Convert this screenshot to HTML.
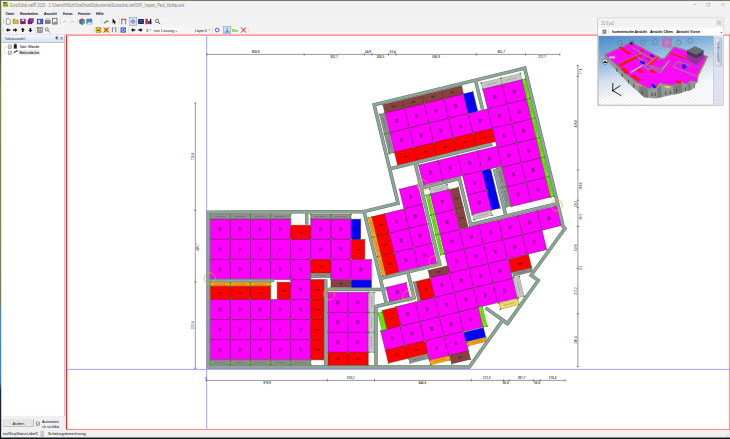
<!DOCTYPE html><html><head><meta charset="utf-8"><title>EuroSchal</title>
<style>html,body{margin:0;padding:0;background:#202024;overflow:hidden}svg{display:block}text{font-family:"Liberation Sans",sans-serif}</style></head><body>
<svg width="730" height="439" viewBox="0 0 730 439">
<defs>
<linearGradient id="desk" x1="0" y1="0" x2="0" y2="1"><stop offset="0" stop-color="#6b6d4e"/><stop offset="0.12" stop-color="#50573f"/><stop offset="0.2" stop-color="#7e8859"/><stop offset="0.69" stop-color="#7a8458"/><stop offset="0.71" stop-color="#4a88c4"/><stop offset="0.87" stop-color="#4680bc"/><stop offset="0.89" stop-color="#1f2a44"/><stop offset="1" stop-color="#15181f"/></linearGradient>
<linearGradient id="hdr" x1="0" y1="0" x2="0" y2="1"><stop offset="0" stop-color="#f4f8fd"/><stop offset="1" stop-color="#d5e2f3"/></linearGradient>
<linearGradient id="sky" x1="0" y1="0" x2="0.32" y2="1"><stop offset="0" stop-color="#4f8fcc"/><stop offset="0.33" stop-color="#8cb8e0"/><stop offset="0.62" stop-color="#dce8f4"/><stop offset="0.88" stop-color="#ffffff"/></linearGradient>
<linearGradient id="tab" x1="0" y1="0" x2="1" y2="0"><stop offset="0" stop-color="#eef2fa"/><stop offset="1" stop-color="#b9c4dd"/></linearGradient>
<clipPath id="c3d"><rect x="598.6" y="36" width="115" height="69"/></clipPath>
</defs>
<rect x="0" y="0" width="730" height="439" fill="url(#desk)"/>
<rect x="0" y="437.2" width="730" height="2" fill="#15171c"/>
<rect x="1.5" y="0.9" width="728.5" height="436.4" fill="#f0f0f0"/>
<rect x="1.5" y="0.9" width="1" height="436.4" fill="#fafafa"/>
<rect x="2.5" y="1" width="727.5" height="8.3" fill="#f2f2f2"/>
<rect x="2.5" y="17.4" width="727.5" height="17" fill="#f3f3f3"/>
<rect x="3.1" y="2" width="5.1" height="5.2" fill="#d6cf34"/><rect x="3.1" y="2" width="3.6" height="1.6" fill="#3f6a22"/><rect x="3.1" y="4.7" width="5.1" height="0.9" fill="#5a5a18"/>
<text x="10.10" y="6.65" font-size="4.70" fill="#8c8c8c" stroke="#8c8c8c" stroke-width="0.06" text-anchor="start" textLength="174" lengthAdjust="spacingAndGlyphs">EuroSchal.net® 2025 - C:\Users\HiSch\OneDrive\Dokumente\Euroschal.net\DXF_Import_Paul_Vorbau.esl</text>
<g stroke="#8e8e8e" stroke-width="0.4" fill="none"><path d="M693.2,4.6h3.2"/><rect x="706.9" y="3.1" width="3" height="3"/><path d="M721.2,3l3.2,3.2M724.4,3l-3.2,3.2"/></g>
<text x="5.80" y="14.90" font-size="4.40" fill="#1a1a1a" stroke="#1a1a1a" stroke-width="0.13" text-anchor="start" textLength="8.3" lengthAdjust="spacingAndGlyphs">Datei</text>
<text x="20.10" y="14.90" font-size="4.40" fill="#1a1a1a" stroke="#1a1a1a" stroke-width="0.13" text-anchor="start" textLength="17.9" lengthAdjust="spacingAndGlyphs">Bearbeiten</text>
<text x="44.10" y="14.90" font-size="4.40" fill="#1a1a1a" stroke="#1a1a1a" stroke-width="0.13" text-anchor="start" textLength="12.7" lengthAdjust="spacingAndGlyphs">Ansicht</text>
<text x="63.00" y="14.90" font-size="4.40" fill="#1a1a1a" stroke="#1a1a1a" stroke-width="0.13" text-anchor="start" textLength="9.4" lengthAdjust="spacingAndGlyphs">Extras</text>
<text x="78.00" y="14.90" font-size="4.40" fill="#1a1a1a" stroke="#1a1a1a" stroke-width="0.13" text-anchor="start" textLength="12.4" lengthAdjust="spacingAndGlyphs">Fenster</text>
<text x="96.00" y="14.90" font-size="4.40" fill="#1a1a1a" stroke="#1a1a1a" stroke-width="0.13" text-anchor="start" textLength="7.6" lengthAdjust="spacingAndGlyphs">Hilfe</text>
<rect x="36.0" y="18.5" width="0.5" height="6" fill="#c8c8c8"/>
<rect x="60.0" y="18.5" width="0.5" height="6" fill="#c8c8c8"/>
<rect x="77.5" y="18.5" width="0.5" height="6" fill="#c8c8c8"/>
<rect x="101.0" y="18.5" width="0.5" height="6" fill="#c8c8c8"/>
<rect x="119.5" y="18.5" width="0.5" height="6" fill="#c8c8c8"/>
<rect x="35.5" y="27.0" width="0.5" height="6" fill="#c8c8c8"/>
<rect x="93.5" y="27.0" width="0.5" height="6" fill="#c8c8c8"/>
<rect x="118.5" y="27.0" width="0.5" height="6" fill="#c8c8c8"/>
<rect x="128.0" y="27.0" width="0.5" height="6" fill="#c8c8c8"/>
<rect x="212.5" y="27.0" width="0.5" height="6" fill="#c8c8c8"/>
<rect x="3" y="19.0" width="0.6" height="5" fill="#bdbdbd"/>
<rect x="3" y="27.5" width="0.6" height="5" fill="#bdbdbd"/>
<path d="M6.3,18.7h2.6l1.3,1.3v4.2h-3.9z" fill="#fff" stroke="#444" stroke-width="0.55"/>
<path d="M13,19.3h2l.6,.7h2.6v3.6h-5.2z" fill="#d8b93a" stroke="#7a6412" stroke-width="0.4"/>
<rect x="20.6" y="19.1" width="4.6" height="4.8" fill="#8a1a7a" stroke="#3a0a3a" stroke-width="0.4"/><rect x="21.7" y="19.3" width="2.4" height="1.8" fill="#e8d8e8"/>
<rect x="28" y="19.9" width="4" height="4" fill="#8a1a7a" stroke="#3a0a3a" stroke-width="0.4"/><rect x="29.3" y="18.7" width="4" height="4" fill="#a0308e" stroke="#3a0a3a" stroke-width="0.4"/>
<rect x="37.3" y="19.1" width="5.6" height="4.8" fill="#4a5ab8" stroke="#1a2a6a" stroke-width="0.5"/><rect x="38.3" y="19.8" width="1.8" height="3.4" fill="#dfe4f6"/>
<rect x="45.2" y="20.5" width="5" height="3" fill="#808080" stroke="#3a3a3a" stroke-width="0.4"/><rect x="46.2" y="18.9" width="3" height="1.6" fill="#e0e0e0" stroke="#444" stroke-width="0.3"/>
<rect x="52.4" y="18.6" width="4.6" height="5.4" fill="#f4f4f4" stroke="#3a3a3a" stroke-width="0.6"/><rect x="53.6" y="21.8" width="3.8" height="2.4" fill="#8a8a8a"/>
<path d="M63,22.3q1.6,-2.2 3.6,0" fill="none" stroke="#b0b0b0" stroke-width="0.7"/><path d="M70.4,22.3q1.8,-2.2 3.6,0" fill="none" stroke="#b0b0b0" stroke-width="0.7"/>
<path d="M79.2,20.1l2.8,-1.6 2.8,1.6v3.2l-2.8,1.6-2.8,-1.6z" fill="#3a6ad8"/><path d="M79.2,20.1l2.8,-1.6 2.8,1.6-2.8,1.6z" fill="#d83a4a"/><path d="M82,21.7l2.8,-1.6v3.2l-2.8,1.6z" fill="#4ab85a"/>
<rect x="86.8" y="19.0" width="5.2" height="5" fill="#4a8ad8" stroke="#2a5aa0" stroke-width="0.4"/><path d="M87,23.7l2,-2 1.4,1.2 1.4,-1.4v2.6h-4.8z" fill="#cfe4f8"/>
<path d="M103.8,23.1q2.4,-3.6 5,-1.4" fill="none" stroke="#2a9a2a" stroke-width="0.9"/><path d="M104.5,23.5l3.5,-2.6" stroke="#333" stroke-width="0.5"/>
<path d="M112.6,18.6v5l1.2,-1.1 1,2 .8,-.4-1,-1.9h1.6z" fill="#111"/>
<path d="M121,19.3h5.4" stroke="#e02020" stroke-width="1"/><path d="M121.8,19.7v4.6M125.6,19.7v4.6" stroke="#3a5ad0" stroke-width="0.8"/>
<rect x="129.2" y="17.7" width="7.6" height="7.6" fill="#cfe3f7" stroke="#5a9ad8" stroke-width="0.5"/><circle cx="133" cy="21.5" r="1.5" fill="none" stroke="#e02040" stroke-width="0.7"/><path d="M133,18.8v5.4M130.3,21.5h5.4" stroke="#5a7ad0" stroke-width="0.35"/>
<rect x="138.2" y="19.0" width="5.6" height="5" fill="#1a2a5a"/><rect x="139.6" y="20.3" width="2.8" height="2.2" fill="#4a8ae8"/><path d="M138,21.5h6" stroke="#111" stroke-width="0.6"/>
<rect x="145.4" y="18.8" width="2.4" height="5.4" fill="#e02020"/><rect x="147.8" y="20.9" width="3.6" height="3" fill="#2a4ad0"/><rect x="150" y="18.8" width="1.2" height="5.4" fill="#202020"/>
<circle cx="157" cy="20.9" r="1.7" fill="#e8e8e8" stroke="#333" stroke-width="0.6"/><path d="M158.2,22.1l2,2" stroke="#333" stroke-width="0.9"/>
<path d="M6,30.0l2.2,-2v1.2h2.2v1.6h-2.2v1.2z" fill="#111"/>
<path d="M17.4,30.0l-2.2,-2v1.2h-2.2v1.6h2.2v1.2z" fill="#111"/>
<path d="M22.8,27.7l-2,2.2h1.2v2.2h1.6v-2.2h1.2z" fill="#111"/>
<path d="M30.4,32.3l-2,-2.2h1.2v-2.2h1.6v2.2h1.2z" fill="#111"/>
<rect x="37.4" y="27.5" width="5" height="5" fill="#f4f4f4" stroke="#333" stroke-width="0.5"/><path d="M38.2,28.2h1.4v1.4h-1.4zM40.2,28.2h1.4v1.4h-1.4zM38.2,30.3h1.4v1.4h-1.4zM40.2,30.3h1.4v1.4h-1.4z" fill="#555"/>
<circle cx="46.8" cy="29.4" r="1.6" fill="#e8e8e8" stroke="#444" stroke-width="0.55"/><path d="M47.9,30.5l2,2" stroke="#444" stroke-width="0.8"/>
<rect x="96" y="27.5" width="5" height="5" fill="#d8c030" stroke="#7a6a10" stroke-width="0.4"/><rect x="97" y="29.8" width="3" height="1.2" fill="#b04020"/>
<rect x="104" y="27.7" width="4.6" height="4.6" fill="#e8c030"/><path d="M103.8,27.5l5,5M108.8,27.5l-5,5" stroke="#e02010" stroke-width="1"/>
<path d="M112.4,27.7v4.6M115.8,27.7v4.6" stroke="#5a6ab0" stroke-width="0.9"/><path d="M111.8,27.7h4.8" stroke="#888" stroke-width="0.5"/>
<rect x="120.6" y="27.4" width="5.2" height="5.2" fill="#3a4ac8"/><circle cx="123.2" cy="30.0" r="1.5" fill="none" stroke="#e8ecff" stroke-width="0.7"/>
<path d="M131,30.0l2.2,-2v1.2h2v1.6h-2v1.2z" fill="#111"/>
<path d="M142.6,30.0l-2.2,-2v1.2h-2v1.6h2v1.2z" fill="#111"/>
<rect x="144.5" y="26.8" width="48" height="6.4" fill="#f6f6f6"/>
<text x="146.00" y="31.50" font-size="4.30" fill="#333" stroke="#333" stroke-width="0.04" text-anchor="start" >3</text>
<path d="M149.6,29.6h1.6l-.8,1z" fill="#444"/>
<text x="154.00" y="31.50" font-size="4.30" fill="#3a3a4a" stroke="#3a3a4a" stroke-width="0.04" text-anchor="start" textLength="22.8" lengthAdjust="spacingAndGlyphs">nur Lösung -</text>
<text x="195.00" y="31.50" font-size="4.30" fill="#333" stroke="#333" stroke-width="0.04" text-anchor="start" textLength="11.8" lengthAdjust="spacingAndGlyphs">Layer 0</text>
<path d="M208.8,29.6h1.6l-.8,1z" fill="#444"/>
<circle cx="217.2" cy="30" r="1.9" fill="#dfe4ff" stroke="#3a4ad0" stroke-width="0.8"/>
<rect x="223.2" y="26.3" width="7.6" height="7.4" fill="#cfe3f7" stroke="#5a9ad8" stroke-width="0.5"/><path d="M224.6,32h5M227,27.6v4.4" stroke="#2a4ab8" stroke-width="0.6"/><path d="M227,30l1.8,2" stroke="#e02020" stroke-width="0.5"/>
<text x="232.00" y="31.60" font-size="4.20" fill="#58d020" stroke="#58d020" stroke-width="0.13" text-anchor="start" font-weight="bold" textLength="5.6" lengthAdjust="spacingAndGlyphs">EIn</text>
<path d="M241,27.4l5,5.2M246,27.4l-5,5.2" stroke="#e81818" stroke-width="1"/>
<rect x="248.6" y="27" width="0.4" height="6" fill="#d0d0d0"/>
<rect x="1.8" y="34.6" width="62.4" height="7.6" fill="url(#hdr)" stroke="#b8c6da" stroke-width="0.3"/>
<text x="4.60" y="40.00" font-size="4.40" fill="#2c4f8f" stroke="#2c4f8f" stroke-width="0.04" text-anchor="start" textLength="20.4" lengthAdjust="spacingAndGlyphs">Taktauswahl</text>
<path d="M55.9,36.8h1.8v1.8h-1.8zM56.8,38.6v1.4" stroke="#2a4a9a" stroke-width="0.5" fill="#5a7ac0"/>
<path d="M60.4,37l2.4,2.6M62.8,37l-2.4,2.6" stroke="#2a4a9a" stroke-width="0.6"/>
<rect x="1.8" y="42.4" width="62.2" height="373.4" fill="#ffffff"/>
<rect x="64.1" y="34.6" width="1.2" height="381.4" fill="#bcc3ca"/>
<rect x="1.8" y="42" width="62.4" height="0.6" fill="#a6a6a6"/>
<path d="M4.6,46.8h3.4M4.6,46.8v6h3.4" stroke="#b0b0b0" stroke-width="0.35" fill="none"/>
<rect x="18.6" y="49.9" width="21.6" height="5.2" fill="#e6e6e6"/>
<rect x="8.2" y="45.0" width="3.4" height="3.4" fill="#fff" stroke="#555" stroke-width="0.45"/><path d="M8.9,46.7l.9,.9 1.4,-1.7" stroke="#222" stroke-width="0.5" fill="none"/>
<rect x="8.2" y="51.0" width="3.4" height="3.4" fill="#fff" stroke="#555" stroke-width="0.45"/><path d="M8.9,52.7l.9,.9 1.4,-1.7" stroke="#222" stroke-width="0.5" fill="none"/>
<rect x="13.8" y="44.4" width="3" height="4.2" fill="#222"/><rect x="14.5" y="43.7" width="1.6" height="0.8" fill="#222"/>
<path d="M13,52.6l3.2,-2h2.2l-3.2,2z" fill="#333"/><path d="M13,53.4l3.2,-2h2.2" stroke="#555" stroke-width="0.4" fill="none"/>
<text x="19.60" y="47.60" font-size="4.30" fill="#222" stroke="#222" stroke-width="0.05" text-anchor="start" textLength="19.6" lengthAdjust="spacingAndGlyphs">Takt: Wände</text>
<text x="19.60" y="54.00" font-size="4.30" fill="#222" stroke="#222" stroke-width="0.05" text-anchor="start" textLength="19.4" lengthAdjust="spacingAndGlyphs">Betondecke</text>
<rect x="3.2" y="419.2" width="30.6" height="7.8" fill="#a0a0a0"/><rect x="3.2" y="419.2" width="30.1" height="7.3" fill="#e6e6e6"/><rect x="3.2" y="419.2" width="30.1" height="0.4" fill="#fafafa"/>
<text x="18.40" y="424.70" font-size="4.30" fill="#333" stroke="#333" stroke-width="0.04" text-anchor="middle" textLength="12" lengthAdjust="spacingAndGlyphs">Ändern</text>
<rect x="36.2" y="422" width="3.3" height="3.3" fill="#fff" stroke="#444" stroke-width="0.45"/><path d="M36.9,423.7l.9,.9 1.3,-1.7" stroke="#222" stroke-width="0.5" fill="none"/>
<text x="42.00" y="422.90" font-size="4.20" fill="#333" stroke="#333" stroke-width="0.05" text-anchor="start" textLength="17" lengthAdjust="spacingAndGlyphs">Automatis</text>
<text x="42.00" y="428.00" font-size="4.20" fill="#333" stroke="#333" stroke-width="0.05" text-anchor="start" textLength="17" lengthAdjust="spacingAndGlyphs">ch sichtba</text>
<rect x="1.6" y="430" width="728.4" height="7.3" fill="#f0f0f0"/>
<text x="3.00" y="435.30" font-size="4.20" fill="#333" stroke="#333" stroke-width="0.05" text-anchor="start" textLength="35" lengthAdjust="spacingAndGlyphs">toolStripStatusLabel1</text>
<rect x="40.4" y="430.8" width="3.6" height="6" fill="#c8c8c8"/>
<text x="48.00" y="435.30" font-size="4.20" fill="#333" stroke="#333" stroke-width="0.05" text-anchor="start" textLength="38" lengthAdjust="spacingAndGlyphs">Schalungsberechnung</text>
<path d="M726,436.6l2.6,-2.6M727.4,436.8l1.4,-1.4" stroke="#b8b8b8" stroke-width="0.5"/>
<rect x="66" y="34.6" width="663.9" height="395.3" fill="#ffffff"/>
<path d="M66.5,34.6V429.9" stroke="#ff1a1a" stroke-width="1"/>
<path d="M66,35.1H729.9" stroke="#ff5a5a" stroke-width="1"/>
<path d="M729.4,34.6V429.9M66,429.4H729.9" stroke="#ff7272" stroke-width="0.9"/>
<path d="M206.7,35.6V429M67,369.4H729" stroke="#8c8cff" stroke-width="0.8" fill="none"/>
<path d="M206.8,54.4H559.9" stroke="#333" stroke-width="0.5"/>
<path d="M206.8,53.2v2.4" stroke="#333" stroke-width="0.5"/>
<path d="M304.1,53.2v2.4" stroke="#333" stroke-width="0.5"/>
<path d="M364.4,53.2v2.4" stroke="#333" stroke-width="0.5"/>
<path d="M372.0,53.2v2.4" stroke="#333" stroke-width="0.5"/>
<path d="M388.5,53.2v2.4" stroke="#333" stroke-width="0.5"/>
<path d="M396.0,53.2v2.4" stroke="#333" stroke-width="0.5"/>
<path d="M476.3,53.2v2.4" stroke="#333" stroke-width="0.5"/>
<path d="M525.6,53.2v2.4" stroke="#333" stroke-width="0.5"/>
<path d="M559.9,53.2v2.4" stroke="#333" stroke-width="0.5"/>
<text x="255.60" y="52.80" font-size="3.10" fill="#222" stroke="#222" stroke-width="0.05" text-anchor="middle" >800,8</text>
<text x="334.20" y="57.90" font-size="3.10" fill="#222" stroke="#222" stroke-width="0.05" text-anchor="middle" >301,7</text>
<text x="368.00" y="52.80" font-size="3.10" fill="#222" stroke="#222" stroke-width="0.05" text-anchor="middle" >54,9</text>
<text x="380.30" y="57.90" font-size="3.10" fill="#222" stroke="#222" stroke-width="0.05" text-anchor="middle" >100,5</text>
<text x="392.60" y="52.80" font-size="3.10" fill="#222" stroke="#222" stroke-width="0.05" text-anchor="middle" >53,4</text>
<text x="436.00" y="57.90" font-size="3.10" fill="#222" stroke="#222" stroke-width="0.05" text-anchor="middle" >506,9</text>
<text x="501.00" y="52.80" font-size="3.10" fill="#222" stroke="#222" stroke-width="0.05" text-anchor="middle" >302,7</text>
<text x="542.00" y="57.90" font-size="3.10" fill="#222" stroke="#222" stroke-width="0.05" text-anchor="middle" >227,7</text>
<path d="M206.0,380.4H565.3" stroke="#333" stroke-width="0.5"/>
<path d="M206.0,379.2v2.4" stroke="#333" stroke-width="0.5"/>
<path d="M327.4,379.2v2.4" stroke="#333" stroke-width="0.5"/>
<path d="M374.5,379.2v2.4" stroke="#333" stroke-width="0.5"/>
<path d="M471.4,379.2v2.4" stroke="#333" stroke-width="0.5"/>
<path d="M503.7,379.2v2.4" stroke="#333" stroke-width="0.5"/>
<path d="M509.2,379.2v2.4" stroke="#333" stroke-width="0.5"/>
<path d="M533.3,379.2v2.4" stroke="#333" stroke-width="0.5"/>
<path d="M540.1,379.2v2.4" stroke="#333" stroke-width="0.5"/>
<path d="M565.3,379.2v2.4" stroke="#333" stroke-width="0.5"/>
<text x="267.10" y="383.90" font-size="3.10" fill="#222" stroke="#222" stroke-width="0.05" text-anchor="middle" >976,9</text>
<text x="350.70" y="379.20" font-size="3.10" fill="#222" stroke="#222" stroke-width="0.05" text-anchor="middle" >370,2</text>
<text x="422.30" y="383.90" font-size="3.10" fill="#222" stroke="#222" stroke-width="0.05" text-anchor="middle" >640,6</text>
<text x="486.70" y="379.20" font-size="3.10" fill="#222" stroke="#222" stroke-width="0.05" text-anchor="middle" >272,3</text>
<text x="505.60" y="383.90" font-size="3.10" fill="#222" stroke="#222" stroke-width="0.05" text-anchor="middle" >36,6</text>
<text x="521.50" y="379.20" font-size="3.10" fill="#222" stroke="#222" stroke-width="0.05" text-anchor="middle" >187,7</text>
<text x="537.10" y="383.90" font-size="3.10" fill="#222" stroke="#222" stroke-width="0.05" text-anchor="middle" >56,6</text>
<text x="552.50" y="379.20" font-size="3.10" fill="#222" stroke="#222" stroke-width="0.05" text-anchor="middle" >170,6</text>
<circle cx="206" cy="378" r="0.9" fill="none" stroke="#333" stroke-width="0.35"/>
<path d="M195.3,103.0V368.3" stroke="#333" stroke-width="0.5"/>
<path d="M194.1,103.0h2.4" stroke="#333" stroke-width="0.5"/>
<path d="M194.1,210.4h2.4" stroke="#333" stroke-width="0.5"/>
<path d="M194.1,282.0h2.4" stroke="#333" stroke-width="0.5"/>
<path d="M194.1,368.3h2.4" stroke="#333" stroke-width="0.5"/>
<text transform="translate(194.2,156.5) rotate(-90)" font-size="3.0" fill="#222" text-anchor="middle">723,4</text>
<text transform="translate(198.6,247.0) rotate(-90)" font-size="3.0" fill="#222" text-anchor="middle">489,7</text>
<text transform="translate(194.2,325.0) rotate(-90)" font-size="3.0" fill="#222" text-anchor="middle">519,4</text>
<path d="M577.9,65.5V366.7" stroke="#333" stroke-width="0.5"/>
<path d="M576.7,65.5h2.4" stroke="#333" stroke-width="0.5"/>
<path d="M576.7,76.4h2.4" stroke="#333" stroke-width="0.5"/>
<path d="M576.7,170.0h2.4" stroke="#333" stroke-width="0.5"/>
<path d="M576.7,200.3h2.4" stroke="#333" stroke-width="0.5"/>
<path d="M576.7,207.6h2.4" stroke="#333" stroke-width="0.5"/>
<path d="M576.7,226.4h2.4" stroke="#333" stroke-width="0.5"/>
<path d="M576.7,268.3h2.4" stroke="#333" stroke-width="0.5"/>
<path d="M576.7,313.9h2.4" stroke="#333" stroke-width="0.5"/>
<path d="M576.7,366.7h2.4" stroke="#333" stroke-width="0.5"/>
<text transform="translate(581.6,71.5) rotate(-90)" font-size="3.0" fill="#222" text-anchor="middle">77,4</text>
<text transform="translate(577.0,123.8) rotate(-90)" font-size="3.0" fill="#222" text-anchor="middle">428,8</text>
<text transform="translate(581.6,185.7) rotate(-90)" font-size="3.0" fill="#222" text-anchor="middle">200,0</text>
<text transform="translate(577.0,204.0) rotate(-90)" font-size="3.0" fill="#222" text-anchor="middle">58,3</text>
<text transform="translate(581.6,216.7) rotate(-90)" font-size="3.0" fill="#222" text-anchor="middle">60,9</text>
<text transform="translate(577.0,247.5) rotate(-90)" font-size="3.0" fill="#222" text-anchor="middle">319,0</text>
<text transform="translate(581.6,267.6) rotate(-90)" font-size="3.0" fill="#222" text-anchor="middle">4,1</text>
<text transform="translate(577.0,291.0) rotate(-90)" font-size="3.0" fill="#222" text-anchor="middle">372,2</text>
<text transform="translate(577.0,340.0) rotate(-90)" font-size="3.0" fill="#222" text-anchor="middle">280,4</text>
<g id="plan">
<polygon points="210.30,214.30 230.40,214.30 230.40,219.30 210.30,219.30" fill="#8f8f8f" stroke="#5a5a4a" stroke-width="0.5"/>
<polygon points="230.40,214.30 250.50,214.30 250.50,219.30 230.40,219.30" fill="#8f8f8f" stroke="#5a5a4a" stroke-width="0.5"/>
<polygon points="250.50,214.30 270.60,214.30 270.60,219.30 250.50,219.30" fill="#8f8f8f" stroke="#5a5a4a" stroke-width="0.5"/>
<polygon points="270.60,214.30 290.70,214.30 290.70,219.30 270.60,219.30" fill="#8f8f8f" stroke="#5a5a4a" stroke-width="0.5"/>
<polygon points="310.80,214.30 330.90,214.30 330.90,219.30 310.80,219.30" fill="#8f8f8f" stroke="#5a5a4a" stroke-width="0.5"/>
<polygon points="330.90,214.30 351.00,214.30 351.00,219.30 330.90,219.30" fill="#8f8f8f" stroke="#5a5a4a" stroke-width="0.5"/>
<polygon points="210.30,219.30 230.40,219.30 230.40,239.35 210.30,239.35" fill="#ff00ff" stroke="#6a006a" stroke-width="0.5"/>
<polygon points="210.30,239.35 230.40,239.35 230.40,259.40 210.30,259.40" fill="#ff00ff" stroke="#6a006a" stroke-width="0.5"/>
<polygon points="210.30,259.40 230.40,259.40 230.40,279.45 210.30,279.45" fill="#ff00ff" stroke="#6a006a" stroke-width="0.5"/>
<polygon points="230.40,219.30 250.50,219.30 250.50,239.35 230.40,239.35" fill="#ff00ff" stroke="#6a006a" stroke-width="0.5"/>
<polygon points="230.40,239.35 250.50,239.35 250.50,259.40 230.40,259.40" fill="#ff00ff" stroke="#6a006a" stroke-width="0.5"/>
<polygon points="230.40,259.40 250.50,259.40 250.50,279.45 230.40,279.45" fill="#ff00ff" stroke="#6a006a" stroke-width="0.5"/>
<polygon points="250.50,219.30 270.60,219.30 270.60,239.35 250.50,239.35" fill="#ff00ff" stroke="#6a006a" stroke-width="0.5"/>
<polygon points="250.50,239.35 270.60,239.35 270.60,259.40 250.50,259.40" fill="#ff00ff" stroke="#6a006a" stroke-width="0.5"/>
<polygon points="250.50,259.40 270.60,259.40 270.60,279.45 250.50,279.45" fill="#ff00ff" stroke="#6a006a" stroke-width="0.5"/>
<polygon points="270.60,219.30 290.70,219.30 290.70,239.35 270.60,239.35" fill="#ff00ff" stroke="#6a006a" stroke-width="0.5"/>
<polygon points="270.60,239.35 290.70,239.35 290.70,259.40 270.60,259.40" fill="#ff00ff" stroke="#6a006a" stroke-width="0.5"/>
<polygon points="270.60,259.40 290.70,259.40 290.70,279.45 270.60,279.45" fill="#ff00ff" stroke="#6a006a" stroke-width="0.5"/>
<polygon points="290.70,225.30 310.80,225.30 310.80,239.50 290.70,239.50" fill="#ff0000" stroke="#8a0000" stroke-width="0.5"/>
<polygon points="290.70,239.50 310.80,239.50 310.80,259.55 290.70,259.55" fill="#ff00ff" stroke="#6a006a" stroke-width="0.5"/>
<polygon points="290.70,259.55 310.80,259.55 310.80,279.60 290.70,279.60" fill="#ff00ff" stroke="#6a006a" stroke-width="0.5"/>
<polygon points="310.80,219.30 330.90,219.30 330.90,239.35 310.80,239.35" fill="#ff00ff" stroke="#6a006a" stroke-width="0.5"/>
<polygon points="310.80,239.35 330.90,239.35 330.90,259.40 310.80,259.40" fill="#ff00ff" stroke="#6a006a" stroke-width="0.5"/>
<polygon points="330.90,219.30 351.00,219.30 351.00,239.35 330.90,239.35" fill="#ff00ff" stroke="#6a006a" stroke-width="0.5"/>
<polygon points="330.90,239.35 351.00,239.35 351.00,259.40 330.90,259.40" fill="#ff00ff" stroke="#6a006a" stroke-width="0.5"/>
<polygon points="310.80,259.60 330.90,259.60 330.90,273.10 310.80,273.10" fill="#ff0000" stroke="#8a0000" stroke-width="0.5"/>
<polygon points="310.80,273.30 330.90,273.30 330.90,277.50 310.80,277.50" fill="#8f8f8f" stroke="#5a5a4a" stroke-width="0.5"/>
<polygon points="330.90,259.60 351.00,259.60 351.00,279.60 330.90,279.60" fill="#ff00ff" stroke="#6a006a" stroke-width="0.5"/>
<polygon points="351.30,219.30 360.50,219.30 360.50,239.50 351.30,239.50" fill="#0000ff" stroke="#00008a" stroke-width="0.5"/>
<polygon points="351.30,239.60 364.70,239.60 364.70,259.30 351.30,259.30" fill="#ff0000" stroke="#8a0000" stroke-width="0.5"/>
<polygon points="351.30,259.60 371.30,259.60 371.30,279.60 351.30,279.60" fill="#ff00ff" stroke="#6a006a" stroke-width="0.5"/>
<polygon points="331.10,280.10 350.80,280.10 350.80,287.30 331.10,287.30" fill="#8b4040" stroke="#4a2020" stroke-width="0.5"/>
<polygon points="351.30,280.10 371.30,280.10 371.30,287.60 351.30,287.60" fill="#0000ff" stroke="#00008a" stroke-width="0.5"/>
<polygon points="210.30,282.60 230.40,282.60 230.40,286.10 210.30,286.10" fill="#ffa010" stroke="#9a6a00" stroke-width="0.5"/>
<polygon points="230.40,282.60 250.50,282.60 250.50,286.10 230.40,286.10" fill="#ffa010" stroke="#9a6a00" stroke-width="0.5"/>
<polygon points="250.50,282.60 270.60,282.60 270.60,286.10 250.50,286.10" fill="#ffa010" stroke="#9a6a00" stroke-width="0.5"/>
<polygon points="210.30,286.30 230.40,286.30 230.40,299.60 210.30,299.60" fill="#ff0000" stroke="#8a0000" stroke-width="0.5"/>
<polygon points="230.40,286.30 250.50,286.30 250.50,299.60 230.40,299.60" fill="#ff0000" stroke="#8a0000" stroke-width="0.5"/>
<polygon points="250.50,286.30 270.60,286.30 270.60,299.60 250.50,299.60" fill="#ff0000" stroke="#8a0000" stroke-width="0.5"/>
<polygon points="277.30,282.30 290.70,282.30 290.70,299.60 277.30,299.60" fill="#ff0000" stroke="#8a0000" stroke-width="0.5"/>
<polygon points="290.70,279.60 310.80,279.60 310.80,299.60 290.70,299.60" fill="#ff00ff" stroke="#6a006a" stroke-width="0.5"/>
<polygon points="310.80,279.60 324.30,279.60 324.30,299.60 310.80,299.60" fill="#ff0000" stroke="#8a0000" stroke-width="0.5"/>
<polygon points="210.30,299.60 230.40,299.60 230.40,319.65 210.30,319.65" fill="#ff00ff" stroke="#6a006a" stroke-width="0.5"/>
<polygon points="210.30,319.65 230.40,319.65 230.40,339.70 210.30,339.70" fill="#ff00ff" stroke="#6a006a" stroke-width="0.5"/>
<polygon points="210.30,339.70 230.40,339.70 230.40,359.75 210.30,359.75" fill="#ff00ff" stroke="#6a006a" stroke-width="0.5"/>
<polygon points="230.40,299.60 250.50,299.60 250.50,319.65 230.40,319.65" fill="#ff00ff" stroke="#6a006a" stroke-width="0.5"/>
<polygon points="230.40,319.65 250.50,319.65 250.50,339.70 230.40,339.70" fill="#ff00ff" stroke="#6a006a" stroke-width="0.5"/>
<polygon points="230.40,339.70 250.50,339.70 250.50,359.75 230.40,359.75" fill="#ff00ff" stroke="#6a006a" stroke-width="0.5"/>
<polygon points="250.50,299.60 270.60,299.60 270.60,319.65 250.50,319.65" fill="#ff00ff" stroke="#6a006a" stroke-width="0.5"/>
<polygon points="250.50,319.65 270.60,319.65 270.60,339.70 250.50,339.70" fill="#ff00ff" stroke="#6a006a" stroke-width="0.5"/>
<polygon points="250.50,339.70 270.60,339.70 270.60,359.75 250.50,359.75" fill="#ff00ff" stroke="#6a006a" stroke-width="0.5"/>
<polygon points="270.60,299.60 290.70,299.60 290.70,319.65 270.60,319.65" fill="#ff00ff" stroke="#6a006a" stroke-width="0.5"/>
<polygon points="270.60,319.65 290.70,319.65 290.70,339.70 270.60,339.70" fill="#ff00ff" stroke="#6a006a" stroke-width="0.5"/>
<polygon points="270.60,339.70 290.70,339.70 290.70,359.75 270.60,359.75" fill="#ff00ff" stroke="#6a006a" stroke-width="0.5"/>
<polygon points="290.70,299.60 310.80,299.60 310.80,319.65 290.70,319.65" fill="#ff00ff" stroke="#6a006a" stroke-width="0.5"/>
<polygon points="290.70,319.65 310.80,319.65 310.80,339.70 290.70,339.70" fill="#ff00ff" stroke="#6a006a" stroke-width="0.5"/>
<polygon points="290.70,339.70 310.80,339.70 310.80,359.75 290.70,359.75" fill="#ff00ff" stroke="#6a006a" stroke-width="0.5"/>
<polygon points="310.80,299.60 324.30,299.60 324.30,319.65 310.80,319.65" fill="#ff0000" stroke="#8a0000" stroke-width="0.5"/>
<polygon points="310.80,319.65 324.30,319.65 324.30,339.70 310.80,339.70" fill="#ff0000" stroke="#8a0000" stroke-width="0.5"/>
<polygon points="310.80,339.70 324.30,339.70 324.30,359.75 310.80,359.75" fill="#ff0000" stroke="#8a0000" stroke-width="0.5"/>
<polygon points="210.30,359.90 230.40,359.90 230.40,364.90 210.30,364.90" fill="#8f8f8f" stroke="#5a5a4a" stroke-width="0.5"/>
<polygon points="230.40,359.90 250.50,359.90 250.50,364.90 230.40,364.90" fill="#8f8f8f" stroke="#5a5a4a" stroke-width="0.5"/>
<polygon points="250.50,359.90 270.60,359.90 270.60,364.90 250.50,364.90" fill="#8f8f8f" stroke="#5a5a4a" stroke-width="0.5"/>
<polygon points="270.60,359.90 290.70,359.90 290.70,364.90 270.60,364.90" fill="#8f8f8f" stroke="#5a5a4a" stroke-width="0.5"/>
<polygon points="290.70,359.90 310.80,359.90 310.80,364.90 290.70,364.90" fill="#8f8f8f" stroke="#5a5a4a" stroke-width="0.5"/>
<polygon points="327.90,292.50 348.05,292.50 348.05,312.45 327.90,312.45" fill="#ff00ff" stroke="#6a006a" stroke-width="0.5"/>
<polygon points="327.90,312.45 348.05,312.45 348.05,332.40 327.90,332.40" fill="#ff00ff" stroke="#6a006a" stroke-width="0.5"/>
<polygon points="327.90,332.40 348.05,332.40 348.05,352.35 327.90,352.35" fill="#ff00ff" stroke="#6a006a" stroke-width="0.5"/>
<polygon points="348.05,292.50 368.20,292.50 368.20,312.45 348.05,312.45" fill="#ff00ff" stroke="#6a006a" stroke-width="0.5"/>
<polygon points="348.05,312.45 368.20,312.45 368.20,332.40 348.05,332.40" fill="#ff00ff" stroke="#6a006a" stroke-width="0.5"/>
<polygon points="348.05,332.40 368.20,332.40 368.20,352.35 348.05,352.35" fill="#ff00ff" stroke="#6a006a" stroke-width="0.5"/>
<polygon points="327.90,352.40 348.05,352.40 348.05,365.50 327.90,365.50" fill="#ff0000" stroke="#8a0000" stroke-width="0.5"/>
<polygon points="348.05,352.40 368.20,352.40 368.20,365.50 348.05,365.50" fill="#ff0000" stroke="#8a0000" stroke-width="0.5"/>
<polygon points="368.90,292.50 374.30,292.50 374.30,312.45 368.90,312.45" fill="#c6c6c6" stroke="#8a8a7a" stroke-width="0.5"/>
<polygon points="368.90,312.45 374.30,312.45 374.30,332.40 368.90,332.40" fill="#c6c6c6" stroke="#8a8a7a" stroke-width="0.5"/>
<polygon points="368.90,332.40 374.30,332.40 374.30,352.35 368.90,352.35" fill="#c6c6c6" stroke="#8a8a7a" stroke-width="0.5"/>
<polygon points="382.99,104.81 402.62,100.04 404.62,108.30 384.99,113.07" fill="#8b4040" stroke="#4a2020" stroke-width="0.5"/>
<polygon points="402.62,100.04 422.25,95.28 424.25,103.54 404.62,108.30" fill="#8b4040" stroke="#4a2020" stroke-width="0.5"/>
<polygon points="422.25,95.28 441.88,90.51 443.88,98.77 424.25,103.54" fill="#8b4040" stroke="#4a2020" stroke-width="0.5"/>
<polygon points="441.88,90.51 461.51,85.74 463.51,94.00 443.88,98.77" fill="#8b4040" stroke="#4a2020" stroke-width="0.5"/>
<polygon points="379.55,114.39 384.22,113.26 388.98,132.89 384.32,134.02" fill="#8f8f8f" stroke="#5a5a4a" stroke-width="0.5"/>
<polygon points="384.32,134.02 388.98,132.89 393.75,152.52 389.09,153.65" fill="#8f8f8f" stroke="#5a5a4a" stroke-width="0.5"/>
<polygon points="384.99,113.07 404.62,108.30 409.39,127.93 389.76,132.70" fill="#ff00ff" stroke="#6a006a" stroke-width="0.5"/>
<polygon points="404.62,108.30 424.25,103.54 429.02,123.17 409.39,127.93" fill="#ff00ff" stroke="#6a006a" stroke-width="0.5"/>
<polygon points="424.25,103.54 443.88,98.77 448.65,118.40 429.02,123.17" fill="#ff00ff" stroke="#6a006a" stroke-width="0.5"/>
<polygon points="443.88,98.77 463.51,94.00 468.28,113.63 448.65,118.40" fill="#ff00ff" stroke="#6a006a" stroke-width="0.5"/>
<polygon points="463.61,93.98 472.84,91.74 477.61,111.37 468.38,113.61" fill="#0000ff" stroke="#00008a" stroke-width="0.5"/>
<polygon points="389.76,132.70 409.39,127.93 414.16,147.56 394.53,152.33" fill="#ff00ff" stroke="#6a006a" stroke-width="0.5"/>
<polygon points="409.39,127.93 429.02,123.17 433.79,142.80 414.16,147.56" fill="#ff00ff" stroke="#6a006a" stroke-width="0.5"/>
<polygon points="429.02,123.17 448.65,118.40 453.42,138.03 433.79,142.80" fill="#ff00ff" stroke="#6a006a" stroke-width="0.5"/>
<polygon points="448.65,118.40 468.28,113.63 473.05,133.26 453.42,138.03" fill="#ff00ff" stroke="#6a006a" stroke-width="0.5"/>
<polygon points="468.28,113.63 487.91,108.87 492.68,128.50 473.05,133.26" fill="#ff00ff" stroke="#6a006a" stroke-width="0.5"/>
<polygon points="394.53,152.33 414.16,147.56 417.32,160.59 397.69,165.35" fill="#ff0000" stroke="#8a0000" stroke-width="0.5"/>
<polygon points="414.16,147.56 433.79,142.80 436.95,155.82 417.32,160.59" fill="#ff0000" stroke="#8a0000" stroke-width="0.5"/>
<polygon points="433.79,142.80 453.42,138.03 456.58,151.05 436.95,155.82" fill="#ff0000" stroke="#8a0000" stroke-width="0.5"/>
<polygon points="453.42,138.03 473.05,133.26 476.21,146.28 456.58,151.05" fill="#ff0000" stroke="#8a0000" stroke-width="0.5"/>
<polygon points="473.05,133.26 492.68,128.50 495.84,141.52 476.21,146.28" fill="#ff0000" stroke="#8a0000" stroke-width="0.5"/>
<polygon points="481.29,82.89 500.82,78.15 502.38,84.56 482.85,89.31" fill="#c6c6c6" stroke="#8a8a7a" stroke-width="0.5"/>
<polygon points="500.82,78.15 520.36,73.41 521.91,79.82 502.38,84.56" fill="#c6c6c6" stroke="#8a8a7a" stroke-width="0.5"/>
<polygon points="482.95,89.28 502.43,84.55 507.17,104.08 487.69,108.82" fill="#ff00ff" stroke="#6a006a" stroke-width="0.5"/>
<polygon points="487.69,108.82 507.17,104.08 511.92,123.62 492.43,128.35" fill="#ff00ff" stroke="#6a006a" stroke-width="0.5"/>
<polygon points="492.43,128.35 511.92,123.62 516.66,143.15 497.18,147.88" fill="#ff00ff" stroke="#6a006a" stroke-width="0.5"/>
<polygon points="497.18,147.88 516.66,143.15 521.40,162.68 501.92,167.41" fill="#ff00ff" stroke="#6a006a" stroke-width="0.5"/>
<polygon points="501.92,167.41 521.40,162.68 526.15,182.21 506.66,186.95" fill="#ff00ff" stroke="#6a006a" stroke-width="0.5"/>
<polygon points="506.66,186.95 526.15,182.21 530.89,201.75 511.41,206.48" fill="#ff00ff" stroke="#6a006a" stroke-width="0.5"/>
<polygon points="502.43,84.55 521.91,79.82 526.66,99.35 507.17,104.08" fill="#ff00ff" stroke="#6a006a" stroke-width="0.5"/>
<polygon points="507.17,104.08 526.66,99.35 531.40,118.89 511.92,123.62" fill="#ff00ff" stroke="#6a006a" stroke-width="0.5"/>
<polygon points="511.92,123.62 531.40,118.89 536.14,138.42 516.66,143.15" fill="#ff00ff" stroke="#6a006a" stroke-width="0.5"/>
<polygon points="516.66,143.15 536.14,138.42 540.89,157.95 521.40,162.68" fill="#ff00ff" stroke="#6a006a" stroke-width="0.5"/>
<polygon points="521.40,162.68 540.89,157.95 545.63,177.48 526.15,182.21" fill="#ff00ff" stroke="#6a006a" stroke-width="0.5"/>
<polygon points="526.15,182.21 545.63,177.48 550.37,197.01 530.89,201.75" fill="#ff00ff" stroke="#6a006a" stroke-width="0.5"/>
<polygon points="522.30,79.73 525.32,78.99 530.06,98.53 527.05,99.26" fill="#6cf000" stroke="#3a8a00" stroke-width="0.5"/>
<polygon points="527.05,99.26 530.06,98.53 534.80,118.06 531.79,118.79" fill="#6cf000" stroke="#3a8a00" stroke-width="0.5"/>
<polygon points="531.79,118.79 534.80,118.06 539.55,137.59 536.53,138.32" fill="#6cf000" stroke="#3a8a00" stroke-width="0.5"/>
<polygon points="536.53,138.32 539.55,137.59 544.29,157.12 541.28,157.86" fill="#6cf000" stroke="#3a8a00" stroke-width="0.5"/>
<polygon points="541.28,157.86 544.29,157.12 549.03,176.66 546.02,177.39" fill="#6cf000" stroke="#3a8a00" stroke-width="0.5"/>
<polygon points="546.02,177.39 549.03,176.66 553.78,196.19 550.76,196.92" fill="#6cf000" stroke="#3a8a00" stroke-width="0.5"/>
<polygon points="418.65,165.20 438.23,160.45 443.04,180.27 423.46,185.03" fill="#ff00ff" stroke="#6a006a" stroke-width="0.5"/>
<polygon points="438.23,160.45 457.81,155.69 462.62,175.52 443.04,180.27" fill="#ff00ff" stroke="#6a006a" stroke-width="0.5"/>
<polygon points="457.81,155.69 477.39,150.94 482.20,170.76 462.62,175.52" fill="#ff00ff" stroke="#6a006a" stroke-width="0.5"/>
<polygon points="477.39,150.94 496.97,146.18 501.78,166.01 482.20,170.76" fill="#ff00ff" stroke="#6a006a" stroke-width="0.5"/>
<polygon points="462.62,175.52 482.25,170.75 487.00,190.28 467.37,195.05" fill="#ff00ff" stroke="#6a006a" stroke-width="0.5"/>
<polygon points="467.37,195.05 487.00,190.28 491.74,209.81 472.11,214.58" fill="#ff00ff" stroke="#6a006a" stroke-width="0.5"/>
<polygon points="482.32,171.04 490.58,169.03 495.30,188.47 487.04,190.48" fill="#0000ff" stroke="#00008a" stroke-width="0.5"/>
<polygon points="487.04,190.48 495.30,188.47 500.02,207.90 491.76,209.91" fill="#0000ff" stroke="#00008a" stroke-width="0.5"/>
<polygon points="472.84,214.61 490.81,210.24 492.04,215.30 474.06,219.66" fill="#c6c6c6" stroke="#8a8a7a" stroke-width="0.5"/>
<polygon points="496.63,168.08 501.49,166.90 506.21,186.34 501.35,187.52" fill="#8f8f8f" stroke="#5a5a4a" stroke-width="0.5"/>
<polygon points="501.35,187.52 506.21,186.34 510.93,205.77 506.07,206.95" fill="#8f8f8f" stroke="#5a5a4a" stroke-width="0.5"/>
<polygon points="429.52,188.80 447.01,184.55 448.19,189.41 430.70,193.66" fill="#c6c6c6" stroke="#8a8a7a" stroke-width="0.5"/>
<polygon points="426.06,195.30 429.17,194.55 433.98,214.37 430.87,215.13" fill="#6cf000" stroke="#3a8a00" stroke-width="0.5"/>
<polygon points="430.87,215.13 433.98,214.37 438.80,234.20 435.69,234.95" fill="#6cf000" stroke="#3a8a00" stroke-width="0.5"/>
<polygon points="435.69,234.95 438.80,234.20 443.61,254.02 440.50,254.77" fill="#6cf000" stroke="#3a8a00" stroke-width="0.5"/>
<polygon points="430.34,194.27 449.77,189.55 454.63,209.56 435.20,214.28" fill="#ff00ff" stroke="#6a006a" stroke-width="0.5"/>
<polygon points="435.20,214.28 454.63,209.56 459.49,229.58 440.06,234.30" fill="#ff00ff" stroke="#6a006a" stroke-width="0.5"/>
<polygon points="450.26,189.43 458.32,187.47 463.11,207.20 455.05,209.15" fill="#8b4040" stroke="#4a2020" stroke-width="0.5"/>
<polygon points="455.05,209.15 463.11,207.20 467.90,226.92 459.84,228.88" fill="#8b4040" stroke="#4a2020" stroke-width="0.5"/>
<polygon points="368.13,217.81 372.02,216.86 376.74,236.30 372.85,237.24" fill="#ffa010" stroke="#9a6a00" stroke-width="0.5"/>
<polygon points="372.85,237.24 376.74,236.30 381.46,255.74 377.57,256.68" fill="#ffa010" stroke="#9a6a00" stroke-width="0.5"/>
<polygon points="377.57,256.68 381.46,255.74 386.18,275.17 382.29,276.11" fill="#ffa010" stroke="#9a6a00" stroke-width="0.5"/>
<polygon points="372.02,216.86 384.65,213.80 389.37,233.23 376.74,236.30" fill="#ff0000" stroke="#8a0000" stroke-width="0.5"/>
<polygon points="376.74,236.30 389.37,233.23 394.09,252.67 381.46,255.74" fill="#ff0000" stroke="#8a0000" stroke-width="0.5"/>
<polygon points="381.46,255.74 394.09,252.67 398.81,272.10 386.18,275.17" fill="#ff0000" stroke="#8a0000" stroke-width="0.5"/>
<polygon points="384.65,213.80 404.19,209.05 408.91,228.49 389.37,233.23" fill="#ff00ff" stroke="#6a006a" stroke-width="0.5"/>
<polygon points="389.37,233.23 408.91,228.49 413.63,247.92 394.09,252.67" fill="#ff00ff" stroke="#6a006a" stroke-width="0.5"/>
<polygon points="394.09,252.67 413.63,247.92 418.35,267.36 398.81,272.10" fill="#ff00ff" stroke="#6a006a" stroke-width="0.5"/>
<polygon points="399.37,189.23 417.64,184.79 422.38,204.33 404.12,208.76" fill="#ff00ff" stroke="#6a006a" stroke-width="0.5"/>
<polygon points="404.12,208.76 422.38,204.33 427.13,223.86 408.86,228.29" fill="#ff00ff" stroke="#6a006a" stroke-width="0.5"/>
<polygon points="408.86,228.29 427.13,223.86 431.87,243.39 413.60,247.83" fill="#ff00ff" stroke="#6a006a" stroke-width="0.5"/>
<polygon points="413.60,247.83 431.87,243.39 436.62,262.92 418.35,267.36" fill="#ff00ff" stroke="#6a006a" stroke-width="0.5"/>
<polygon points="386.10,287.54 406.02,282.70 409.44,296.79 389.52,301.63" fill="#ff00ff" stroke="#6a006a" stroke-width="0.5"/>
<polygon points="440.06,234.30 459.49,229.58 464.21,249.02 444.78,253.74" fill="#ff00ff" stroke="#6a006a" stroke-width="0.5"/>
<polygon points="459.49,229.58 478.93,224.86 483.65,244.30 464.21,249.02" fill="#ff00ff" stroke="#6a006a" stroke-width="0.5"/>
<polygon points="478.93,224.86 498.36,220.14 503.08,239.58 483.65,244.30" fill="#ff00ff" stroke="#6a006a" stroke-width="0.5"/>
<polygon points="498.36,220.14 517.80,215.42 522.52,234.86 503.08,239.58" fill="#ff00ff" stroke="#6a006a" stroke-width="0.5"/>
<polygon points="517.80,215.42 537.23,210.70 541.95,230.14 522.52,234.86" fill="#ff00ff" stroke="#6a006a" stroke-width="0.5"/>
<polygon points="537.23,210.70 556.67,205.98 561.39,225.42 541.95,230.14" fill="#ff00ff" stroke="#6a006a" stroke-width="0.5"/>
<polygon points="444.78,253.74 464.21,249.02 468.93,268.45 449.50,273.17" fill="#ff00ff" stroke="#6a006a" stroke-width="0.5"/>
<polygon points="464.21,249.02 483.65,244.30 488.37,263.73 468.93,268.45" fill="#ff00ff" stroke="#6a006a" stroke-width="0.5"/>
<polygon points="483.65,244.30 503.08,239.58 507.80,259.01 488.37,263.73" fill="#ff00ff" stroke="#6a006a" stroke-width="0.5"/>
<polygon points="503.08,239.58 522.52,234.86 527.24,254.29 507.80,259.01" fill="#ff00ff" stroke="#6a006a" stroke-width="0.5"/>
<polygon points="522.52,234.86 541.95,230.14 546.67,249.57 527.24,254.29" fill="#ff00ff" stroke="#6a006a" stroke-width="0.5"/>
<polygon points="428.27,270.51 447.70,265.79 449.50,273.17 430.06,277.89" fill="#8b4040" stroke="#4a2020" stroke-width="0.5"/>
<polygon points="413.32,282.27 416.53,281.49 421.18,300.63 417.97,301.41" fill="#8f8f8f" stroke="#5a5a4a" stroke-width="0.5"/>
<polygon points="416.53,281.49 430.13,278.18 434.78,297.33 421.18,300.63" fill="#ff0000" stroke="#8a0000" stroke-width="0.5"/>
<polygon points="430.06,277.89 449.50,273.17 454.22,292.61 434.78,297.33" fill="#ff00ff" stroke="#6a006a" stroke-width="0.5"/>
<polygon points="449.50,273.17 468.93,268.45 473.65,287.89 454.22,292.61" fill="#ff00ff" stroke="#6a006a" stroke-width="0.5"/>
<polygon points="468.93,268.45 488.37,263.73 493.09,283.17 473.65,287.89" fill="#ff00ff" stroke="#6a006a" stroke-width="0.5"/>
<polygon points="488.37,263.73 507.80,259.01 512.52,278.45 493.09,283.17" fill="#ff00ff" stroke="#6a006a" stroke-width="0.5"/>
<polygon points="508.41,259.38 528.33,254.54 531.51,267.66 511.59,272.50" fill="#ff0000" stroke="#8a0000" stroke-width="0.5"/>
<polygon points="512.61,272.46 531.56,267.86 532.46,271.55 513.51,276.15" fill="#8f8f8f" stroke="#5a5a4a" stroke-width="0.5"/>
<polygon points="513.38,277.73 519.21,276.31 524.04,296.23 518.21,297.65" fill="#c6c6c6" stroke="#8a8a7a" stroke-width="0.5"/>
<polygon points="395.91,306.77 415.35,302.05 420.07,321.48 400.63,326.20" fill="#ff00ff" stroke="#6a006a" stroke-width="0.5"/>
<polygon points="415.35,302.05 434.78,297.33 439.50,316.76 420.07,321.48" fill="#ff00ff" stroke="#6a006a" stroke-width="0.5"/>
<polygon points="434.78,297.33 454.22,292.61 458.94,312.04 439.50,316.76" fill="#ff00ff" stroke="#6a006a" stroke-width="0.5"/>
<polygon points="454.22,292.61 473.65,287.89 478.37,307.32 458.94,312.04" fill="#ff00ff" stroke="#6a006a" stroke-width="0.5"/>
<polygon points="473.65,287.89 493.09,283.17 497.81,302.60 478.37,307.32" fill="#ff00ff" stroke="#6a006a" stroke-width="0.5"/>
<polygon points="493.09,283.17 512.52,278.45 517.24,297.88 497.81,302.60" fill="#ff00ff" stroke="#6a006a" stroke-width="0.5"/>
<polygon points="377.92,313.19 382.29,312.13 386.54,329.62 382.17,330.69" fill="#6cf000" stroke="#3a8a00" stroke-width="0.5"/>
<polygon points="382.43,310.56 396.03,307.25 400.63,326.20 387.03,329.51" fill="#ff0000" stroke="#8a0000" stroke-width="0.5"/>
<polygon points="499.02,303.34 517.77,298.78 519.19,304.61 500.43,309.17" fill="#f2d66a" stroke="#9a8a30" stroke-width="0.5"/>
<polygon points="380.71,331.04 400.24,326.30 404.96,345.73 385.43,350.47" fill="#ff00ff" stroke="#6a006a" stroke-width="0.5"/>
<polygon points="400.24,326.30 419.78,321.55 424.50,340.99 404.96,345.73" fill="#ff00ff" stroke="#6a006a" stroke-width="0.5"/>
<polygon points="419.78,321.55 439.31,316.81 444.03,336.24 424.50,340.99" fill="#ff00ff" stroke="#6a006a" stroke-width="0.5"/>
<polygon points="439.31,316.81 458.84,312.07 463.56,331.50 444.03,336.24" fill="#ff00ff" stroke="#6a006a" stroke-width="0.5"/>
<polygon points="458.84,312.07 478.37,307.32 483.09,326.76 463.56,331.50" fill="#ff00ff" stroke="#6a006a" stroke-width="0.5"/>
<polygon points="478.37,307.32 482.26,306.38 487.05,326.10 483.16,327.05" fill="#6cf000" stroke="#3a8a00" stroke-width="0.5"/>
<polygon points="385.43,350.47 405.06,345.71 408.13,358.34 388.50,363.11" fill="#ff0000" stroke="#8a0000" stroke-width="0.5"/>
<polygon points="405.06,345.71 424.69,340.94 427.76,353.57 408.13,358.34" fill="#ff0000" stroke="#8a0000" stroke-width="0.5"/>
<polygon points="409.02,358.64 427.49,354.15 428.55,358.53 410.09,363.01" fill="#8f8f8f" stroke="#5a5a4a" stroke-width="0.5"/>
<polygon points="424.79,340.92 444.22,336.20 448.94,355.63 429.51,360.35" fill="#ff00ff" stroke="#6a006a" stroke-width="0.5"/>
<polygon points="444.22,336.20 463.66,331.48 468.38,350.91 448.94,355.63" fill="#ff00ff" stroke="#6a006a" stroke-width="0.5"/>
<polygon points="463.89,332.45 483.33,327.73 485.57,336.96 466.13,341.68" fill="#0000ff" stroke="#00008a" stroke-width="0.5"/>
<polygon points="467.22,341.93 485.69,337.45 486.63,341.33 468.17,345.82" fill="#ffa010" stroke="#9a6a00" stroke-width="0.5"/>
<polygon points="429.51,360.35 448.94,355.63 450.00,360.00 430.57,364.72" fill="#ffa010" stroke="#9a6a00" stroke-width="0.5"/>
<polygon points="449.72,355.44 468.38,350.91 470.38,359.17 451.73,363.70" fill="#8b4040" stroke="#4a2020" stroke-width="0.5"/>
<line x1="214.72" y1="216.80" x2="225.98" y2="216.80" stroke="#3a3a3a" stroke-width="0.8" stroke-dasharray="0.9,0.7" opacity="0.6"/>
<line x1="234.82" y1="216.80" x2="246.08" y2="216.80" stroke="#3a3a3a" stroke-width="0.8" stroke-dasharray="0.9,0.7" opacity="0.6"/>
<line x1="254.92" y1="216.80" x2="266.18" y2="216.80" stroke="#3a3a3a" stroke-width="0.8" stroke-dasharray="0.9,0.7" opacity="0.6"/>
<line x1="275.02" y1="216.80" x2="286.28" y2="216.80" stroke="#3a3a3a" stroke-width="0.8" stroke-dasharray="0.9,0.7" opacity="0.6"/>
<line x1="315.22" y1="216.80" x2="326.48" y2="216.80" stroke="#3a3a3a" stroke-width="0.8" stroke-dasharray="0.9,0.7" opacity="0.6"/>
<line x1="335.32" y1="216.80" x2="346.58" y2="216.80" stroke="#3a3a3a" stroke-width="0.8" stroke-dasharray="0.9,0.7" opacity="0.6"/>
<line x1="315.22" y1="275.40" x2="326.48" y2="275.40" stroke="#3a3a3a" stroke-width="0.8" stroke-dasharray="0.9,0.7" opacity="0.6"/>
<line x1="214.72" y1="284.35" x2="225.98" y2="284.35" stroke="#7a4a00" stroke-width="0.8" stroke-dasharray="0.9,0.7" opacity="0.6"/>
<line x1="234.82" y1="284.35" x2="246.08" y2="284.35" stroke="#7a4a00" stroke-width="0.8" stroke-dasharray="0.9,0.7" opacity="0.6"/>
<line x1="254.92" y1="284.35" x2="266.18" y2="284.35" stroke="#7a4a00" stroke-width="0.8" stroke-dasharray="0.9,0.7" opacity="0.6"/>
<line x1="214.72" y1="362.40" x2="225.98" y2="362.40" stroke="#3a3a3a" stroke-width="0.8" stroke-dasharray="0.9,0.7" opacity="0.6"/>
<line x1="234.82" y1="362.40" x2="246.08" y2="362.40" stroke="#3a3a3a" stroke-width="0.8" stroke-dasharray="0.9,0.7" opacity="0.6"/>
<line x1="254.92" y1="362.40" x2="266.18" y2="362.40" stroke="#3a3a3a" stroke-width="0.8" stroke-dasharray="0.9,0.7" opacity="0.6"/>
<line x1="275.02" y1="362.40" x2="286.28" y2="362.40" stroke="#3a3a3a" stroke-width="0.8" stroke-dasharray="0.9,0.7" opacity="0.6"/>
<line x1="295.12" y1="362.40" x2="306.38" y2="362.40" stroke="#3a3a3a" stroke-width="0.8" stroke-dasharray="0.9,0.7" opacity="0.6"/>
<line x1="371.60" y1="296.89" x2="371.60" y2="308.06" stroke="#5a5a5a" stroke-width="0.8" stroke-dasharray="0.9,0.7" opacity="0.6"/>
<line x1="371.60" y1="316.84" x2="371.60" y2="328.01" stroke="#5a5a5a" stroke-width="0.8" stroke-dasharray="0.9,0.7" opacity="0.6"/>
<line x1="371.60" y1="336.79" x2="371.60" y2="347.96" stroke="#5a5a5a" stroke-width="0.8" stroke-dasharray="0.9,0.7" opacity="0.6"/>
<line x1="382.93" y1="118.15" x2="385.60" y2="129.14" stroke="#3a3a3a" stroke-width="0.8" stroke-dasharray="0.9,0.7" opacity="0.6"/>
<line x1="387.70" y1="137.78" x2="390.37" y2="148.77" stroke="#3a3a3a" stroke-width="0.8" stroke-dasharray="0.9,0.7" opacity="0.6"/>
<line x1="486.37" y1="85.06" x2="497.31" y2="82.40" stroke="#5a5a5a" stroke-width="0.8" stroke-dasharray="0.9,0.7" opacity="0.6"/>
<line x1="505.90" y1="80.31" x2="516.84" y2="77.66" stroke="#5a5a5a" stroke-width="0.8" stroke-dasharray="0.9,0.7" opacity="0.6"/>
<line x1="524.85" y1="83.66" x2="527.51" y2="94.60" stroke="#1f6a10" stroke-width="0.8" stroke-dasharray="0.9,0.7" opacity="0.6"/>
<line x1="529.60" y1="103.19" x2="532.25" y2="114.13" stroke="#1f6a10" stroke-width="0.8" stroke-dasharray="0.9,0.7" opacity="0.6"/>
<line x1="534.34" y1="122.72" x2="537.00" y2="133.66" stroke="#1f6a10" stroke-width="0.8" stroke-dasharray="0.9,0.7" opacity="0.6"/>
<line x1="539.08" y1="142.25" x2="541.74" y2="153.19" stroke="#1f6a10" stroke-width="0.8" stroke-dasharray="0.9,0.7" opacity="0.6"/>
<line x1="543.83" y1="161.79" x2="546.48" y2="172.73" stroke="#1f6a10" stroke-width="0.8" stroke-dasharray="0.9,0.7" opacity="0.6"/>
<line x1="548.57" y1="181.32" x2="551.23" y2="192.26" stroke="#1f6a10" stroke-width="0.8" stroke-dasharray="0.9,0.7" opacity="0.6"/>
<line x1="477.41" y1="216.18" x2="487.47" y2="213.73" stroke="#5a5a5a" stroke-width="0.8" stroke-dasharray="0.9,0.7" opacity="0.6"/>
<line x1="500.10" y1="171.77" x2="502.74" y2="182.65" stroke="#3a3a3a" stroke-width="0.8" stroke-dasharray="0.9,0.7" opacity="0.6"/>
<line x1="504.82" y1="191.20" x2="507.46" y2="202.09" stroke="#3a3a3a" stroke-width="0.8" stroke-dasharray="0.9,0.7" opacity="0.6"/>
<line x1="433.96" y1="190.30" x2="443.76" y2="187.92" stroke="#5a5a5a" stroke-width="0.8" stroke-dasharray="0.9,0.7" opacity="0.6"/>
<line x1="428.67" y1="199.29" x2="431.37" y2="210.39" stroke="#1f6a10" stroke-width="0.8" stroke-dasharray="0.9,0.7" opacity="0.6"/>
<line x1="433.49" y1="219.11" x2="436.18" y2="230.21" stroke="#1f6a10" stroke-width="0.8" stroke-dasharray="0.9,0.7" opacity="0.6"/>
<line x1="438.30" y1="238.93" x2="441.00" y2="250.04" stroke="#1f6a10" stroke-width="0.8" stroke-dasharray="0.9,0.7" opacity="0.6"/>
<line x1="371.12" y1="221.61" x2="373.76" y2="232.50" stroke="#7a4a00" stroke-width="0.8" stroke-dasharray="0.9,0.7" opacity="0.6"/>
<line x1="375.84" y1="241.05" x2="378.48" y2="251.93" stroke="#7a4a00" stroke-width="0.8" stroke-dasharray="0.9,0.7" opacity="0.6"/>
<line x1="380.56" y1="260.48" x2="383.20" y2="271.37" stroke="#7a4a00" stroke-width="0.8" stroke-dasharray="0.9,0.7" opacity="0.6"/>
<line x1="415.95" y1="286.09" x2="418.55" y2="296.81" stroke="#3a3a3a" stroke-width="0.8" stroke-dasharray="0.9,0.7" opacity="0.6"/>
<line x1="517.23" y1="273.29" x2="527.84" y2="270.71" stroke="#3a3a3a" stroke-width="0.8" stroke-dasharray="0.9,0.7" opacity="0.6"/>
<line x1="517.36" y1="281.40" x2="520.07" y2="292.56" stroke="#5a5a5a" stroke-width="0.8" stroke-dasharray="0.9,0.7" opacity="0.6"/>
<line x1="381.04" y1="316.51" x2="383.42" y2="326.31" stroke="#1f6a10" stroke-width="0.8" stroke-dasharray="0.9,0.7" opacity="0.6"/>
<line x1="503.85" y1="305.25" x2="514.35" y2="302.70" stroke="#6a5a10" stroke-width="0.8" stroke-dasharray="0.9,0.7" opacity="0.6"/>
<line x1="481.37" y1="311.19" x2="484.05" y2="322.24" stroke="#1f6a10" stroke-width="0.8" stroke-dasharray="0.9,0.7" opacity="0.6"/>
<line x1="413.62" y1="359.84" x2="423.96" y2="357.33" stroke="#3a3a3a" stroke-width="0.8" stroke-dasharray="0.9,0.7" opacity="0.6"/>
<line x1="471.76" y1="342.89" x2="482.10" y2="340.38" stroke="#7a4a00" stroke-width="0.8" stroke-dasharray="0.9,0.7" opacity="0.6"/>
<line x1="434.31" y1="361.50" x2="445.20" y2="358.86" stroke="#7a4a00" stroke-width="0.8" stroke-dasharray="0.9,0.7" opacity="0.6"/>
<circle cx="210.30" cy="214.30" r="0.85" fill="#3a9a1c"/>
<circle cx="230.40" cy="214.30" r="0.85" fill="#3a9a1c"/>
<circle cx="230.40" cy="219.30" r="0.85" fill="#3a9a1c"/>
<circle cx="210.30" cy="219.30" r="0.85" fill="#3a9a1c"/>
<circle cx="250.50" cy="214.30" r="0.85" fill="#3a9a1c"/>
<circle cx="250.50" cy="219.30" r="0.85" fill="#3a9a1c"/>
<circle cx="270.60" cy="214.30" r="0.85" fill="#3a9a1c"/>
<circle cx="270.60" cy="219.30" r="0.85" fill="#3a9a1c"/>
<circle cx="290.70" cy="214.30" r="0.85" fill="#3a9a1c"/>
<circle cx="290.70" cy="219.30" r="0.85" fill="#3a9a1c"/>
<circle cx="310.80" cy="214.30" r="0.85" fill="#3a9a1c"/>
<circle cx="330.90" cy="214.30" r="0.85" fill="#3a9a1c"/>
<circle cx="330.90" cy="219.30" r="0.85" fill="#3a9a1c"/>
<circle cx="310.80" cy="219.30" r="0.85" fill="#3a9a1c"/>
<circle cx="351.00" cy="214.30" r="0.85" fill="#3a9a1c"/>
<circle cx="351.00" cy="219.30" r="0.85" fill="#3a9a1c"/>
<circle cx="230.40" cy="239.35" r="0.85" fill="#3a9a1c"/>
<circle cx="210.30" cy="239.35" r="0.85" fill="#3a9a1c"/>
<circle cx="230.40" cy="259.40" r="0.85" fill="#3a9a1c"/>
<circle cx="210.30" cy="259.40" r="0.85" fill="#3a9a1c"/>
<circle cx="230.40" cy="279.45" r="0.85" fill="#3a9a1c"/>
<circle cx="210.30" cy="279.45" r="0.85" fill="#3a9a1c"/>
<circle cx="250.50" cy="239.35" r="0.85" fill="#3a9a1c"/>
<circle cx="250.50" cy="259.40" r="0.85" fill="#3a9a1c"/>
<circle cx="250.50" cy="279.45" r="0.85" fill="#3a9a1c"/>
<circle cx="270.60" cy="239.35" r="0.85" fill="#3a9a1c"/>
<circle cx="270.60" cy="259.40" r="0.85" fill="#3a9a1c"/>
<circle cx="270.60" cy="279.45" r="0.85" fill="#3a9a1c"/>
<circle cx="290.70" cy="239.35" r="0.85" fill="#3a9a1c"/>
<circle cx="290.70" cy="259.40" r="0.85" fill="#3a9a1c"/>
<circle cx="290.70" cy="279.45" r="0.85" fill="#3a9a1c"/>
<circle cx="290.70" cy="225.30" r="0.85" fill="#3a9a1c"/>
<circle cx="310.80" cy="225.30" r="0.85" fill="#3a9a1c"/>
<circle cx="310.80" cy="239.50" r="0.85" fill="#3a9a1c"/>
<circle cx="310.80" cy="259.55" r="0.85" fill="#3a9a1c"/>
<circle cx="310.80" cy="279.60" r="0.85" fill="#3a9a1c"/>
<circle cx="290.70" cy="279.60" r="0.85" fill="#3a9a1c"/>
<circle cx="330.90" cy="239.35" r="0.85" fill="#3a9a1c"/>
<circle cx="330.90" cy="259.40" r="0.85" fill="#3a9a1c"/>
<circle cx="351.00" cy="239.35" r="0.85" fill="#3a9a1c"/>
<circle cx="351.00" cy="259.40" r="0.85" fill="#3a9a1c"/>
<circle cx="310.80" cy="259.60" r="0.85" fill="#3a9a1c"/>
<circle cx="330.90" cy="259.60" r="0.85" fill="#3a9a1c"/>
<circle cx="330.90" cy="273.10" r="0.85" fill="#3a9a1c"/>
<circle cx="310.80" cy="273.10" r="0.85" fill="#3a9a1c"/>
<circle cx="330.90" cy="277.50" r="0.85" fill="#3a9a1c"/>
<circle cx="310.80" cy="277.50" r="0.85" fill="#3a9a1c"/>
<circle cx="351.00" cy="259.60" r="0.85" fill="#3a9a1c"/>
<circle cx="351.00" cy="279.60" r="0.85" fill="#3a9a1c"/>
<circle cx="330.90" cy="279.60" r="0.85" fill="#3a9a1c"/>
<circle cx="351.30" cy="219.30" r="0.85" fill="#3a9a1c"/>
<circle cx="360.50" cy="219.30" r="0.85" fill="#3a9a1c"/>
<circle cx="360.50" cy="239.50" r="0.85" fill="#3a9a1c"/>
<circle cx="351.30" cy="239.50" r="0.85" fill="#3a9a1c"/>
<circle cx="351.30" cy="239.60" r="0.85" fill="#3a9a1c"/>
<circle cx="364.70" cy="239.60" r="0.85" fill="#3a9a1c"/>
<circle cx="364.70" cy="259.30" r="0.85" fill="#3a9a1c"/>
<circle cx="351.30" cy="259.30" r="0.85" fill="#3a9a1c"/>
<circle cx="351.30" cy="259.60" r="0.85" fill="#3a9a1c"/>
<circle cx="371.30" cy="259.60" r="0.85" fill="#3a9a1c"/>
<circle cx="371.30" cy="279.60" r="0.85" fill="#3a9a1c"/>
<circle cx="351.30" cy="279.60" r="0.85" fill="#3a9a1c"/>
<circle cx="350.80" cy="287.30" r="0.85" fill="#3a9a1c"/>
<circle cx="331.10" cy="287.30" r="0.85" fill="#3a9a1c"/>
<circle cx="371.30" cy="287.60" r="0.85" fill="#3a9a1c"/>
<circle cx="351.30" cy="287.60" r="0.85" fill="#3a9a1c"/>
<circle cx="210.30" cy="282.60" r="0.85" fill="#3a9a1c"/>
<circle cx="230.40" cy="282.60" r="0.85" fill="#3a9a1c"/>
<circle cx="230.40" cy="286.10" r="0.85" fill="#3a9a1c"/>
<circle cx="210.30" cy="286.10" r="0.85" fill="#3a9a1c"/>
<circle cx="250.50" cy="282.60" r="0.85" fill="#3a9a1c"/>
<circle cx="250.50" cy="286.10" r="0.85" fill="#3a9a1c"/>
<circle cx="270.60" cy="282.60" r="0.85" fill="#3a9a1c"/>
<circle cx="270.60" cy="286.10" r="0.85" fill="#3a9a1c"/>
<circle cx="210.30" cy="286.30" r="0.85" fill="#3a9a1c"/>
<circle cx="230.40" cy="286.30" r="0.85" fill="#3a9a1c"/>
<circle cx="230.40" cy="299.60" r="0.85" fill="#3a9a1c"/>
<circle cx="210.30" cy="299.60" r="0.85" fill="#3a9a1c"/>
<circle cx="250.50" cy="286.30" r="0.85" fill="#3a9a1c"/>
<circle cx="250.50" cy="299.60" r="0.85" fill="#3a9a1c"/>
<circle cx="270.60" cy="286.30" r="0.85" fill="#3a9a1c"/>
<circle cx="270.60" cy="299.60" r="0.85" fill="#3a9a1c"/>
<circle cx="277.30" cy="282.30" r="0.85" fill="#3a9a1c"/>
<circle cx="290.70" cy="282.30" r="0.85" fill="#3a9a1c"/>
<circle cx="290.70" cy="299.60" r="0.85" fill="#3a9a1c"/>
<circle cx="277.30" cy="299.60" r="0.85" fill="#3a9a1c"/>
<circle cx="310.80" cy="299.60" r="0.85" fill="#3a9a1c"/>
<circle cx="324.30" cy="279.60" r="0.85" fill="#3a9a1c"/>
<circle cx="324.30" cy="299.60" r="0.85" fill="#3a9a1c"/>
<circle cx="230.40" cy="319.65" r="0.85" fill="#3a9a1c"/>
<circle cx="210.30" cy="319.65" r="0.85" fill="#3a9a1c"/>
<circle cx="230.40" cy="339.70" r="0.85" fill="#3a9a1c"/>
<circle cx="210.30" cy="339.70" r="0.85" fill="#3a9a1c"/>
<circle cx="230.40" cy="359.75" r="0.85" fill="#3a9a1c"/>
<circle cx="210.30" cy="359.75" r="0.85" fill="#3a9a1c"/>
<circle cx="250.50" cy="319.65" r="0.85" fill="#3a9a1c"/>
<circle cx="250.50" cy="339.70" r="0.85" fill="#3a9a1c"/>
<circle cx="250.50" cy="359.75" r="0.85" fill="#3a9a1c"/>
<circle cx="270.60" cy="319.65" r="0.85" fill="#3a9a1c"/>
<circle cx="270.60" cy="339.70" r="0.85" fill="#3a9a1c"/>
<circle cx="270.60" cy="359.75" r="0.85" fill="#3a9a1c"/>
<circle cx="290.70" cy="319.65" r="0.85" fill="#3a9a1c"/>
<circle cx="290.70" cy="339.70" r="0.85" fill="#3a9a1c"/>
<circle cx="290.70" cy="359.75" r="0.85" fill="#3a9a1c"/>
<circle cx="310.80" cy="319.65" r="0.85" fill="#3a9a1c"/>
<circle cx="310.80" cy="339.70" r="0.85" fill="#3a9a1c"/>
<circle cx="310.80" cy="359.75" r="0.85" fill="#3a9a1c"/>
<circle cx="324.30" cy="319.65" r="0.85" fill="#3a9a1c"/>
<circle cx="324.30" cy="339.70" r="0.85" fill="#3a9a1c"/>
<circle cx="324.30" cy="359.75" r="0.85" fill="#3a9a1c"/>
<circle cx="230.40" cy="364.90" r="0.85" fill="#3a9a1c"/>
<circle cx="210.30" cy="364.90" r="0.85" fill="#3a9a1c"/>
<circle cx="250.50" cy="364.90" r="0.85" fill="#3a9a1c"/>
<circle cx="270.60" cy="364.90" r="0.85" fill="#3a9a1c"/>
<circle cx="290.70" cy="364.90" r="0.85" fill="#3a9a1c"/>
<circle cx="310.80" cy="364.90" r="0.85" fill="#3a9a1c"/>
<circle cx="327.90" cy="292.50" r="0.85" fill="#3a9a1c"/>
<circle cx="348.05" cy="292.50" r="0.85" fill="#3a9a1c"/>
<circle cx="348.05" cy="312.45" r="0.85" fill="#3a9a1c"/>
<circle cx="327.90" cy="312.45" r="0.85" fill="#3a9a1c"/>
<circle cx="348.05" cy="332.40" r="0.85" fill="#3a9a1c"/>
<circle cx="327.90" cy="332.40" r="0.85" fill="#3a9a1c"/>
<circle cx="348.05" cy="352.35" r="0.85" fill="#3a9a1c"/>
<circle cx="327.90" cy="352.35" r="0.85" fill="#3a9a1c"/>
<circle cx="368.20" cy="292.50" r="0.85" fill="#3a9a1c"/>
<circle cx="368.20" cy="312.45" r="0.85" fill="#3a9a1c"/>
<circle cx="368.20" cy="332.40" r="0.85" fill="#3a9a1c"/>
<circle cx="368.20" cy="352.35" r="0.85" fill="#3a9a1c"/>
<circle cx="348.05" cy="365.50" r="0.85" fill="#3a9a1c"/>
<circle cx="327.90" cy="365.50" r="0.85" fill="#3a9a1c"/>
<circle cx="368.20" cy="365.50" r="0.85" fill="#3a9a1c"/>
<circle cx="368.90" cy="292.50" r="0.85" fill="#3a9a1c"/>
<circle cx="374.30" cy="292.50" r="0.85" fill="#3a9a1c"/>
<circle cx="374.30" cy="312.45" r="0.85" fill="#3a9a1c"/>
<circle cx="368.90" cy="312.45" r="0.85" fill="#3a9a1c"/>
<circle cx="374.30" cy="332.40" r="0.85" fill="#3a9a1c"/>
<circle cx="368.90" cy="332.40" r="0.85" fill="#3a9a1c"/>
<circle cx="374.30" cy="352.35" r="0.85" fill="#3a9a1c"/>
<circle cx="368.90" cy="352.35" r="0.85" fill="#3a9a1c"/>
<circle cx="382.99" cy="104.81" r="0.85" fill="#3a9a1c"/>
<circle cx="402.62" cy="100.04" r="0.85" fill="#3a9a1c"/>
<circle cx="404.62" cy="108.30" r="0.85" fill="#3a9a1c"/>
<circle cx="384.99" cy="113.07" r="0.85" fill="#3a9a1c"/>
<circle cx="422.25" cy="95.28" r="0.85" fill="#3a9a1c"/>
<circle cx="424.25" cy="103.54" r="0.85" fill="#3a9a1c"/>
<circle cx="441.88" cy="90.51" r="0.85" fill="#3a9a1c"/>
<circle cx="443.88" cy="98.77" r="0.85" fill="#3a9a1c"/>
<circle cx="461.51" cy="85.74" r="0.85" fill="#3a9a1c"/>
<circle cx="463.51" cy="94.00" r="0.85" fill="#3a9a1c"/>
<circle cx="379.55" cy="114.39" r="0.85" fill="#3a9a1c"/>
<circle cx="384.22" cy="113.26" r="0.85" fill="#3a9a1c"/>
<circle cx="388.98" cy="132.89" r="0.85" fill="#3a9a1c"/>
<circle cx="384.32" cy="134.02" r="0.85" fill="#3a9a1c"/>
<circle cx="393.75" cy="152.52" r="0.85" fill="#3a9a1c"/>
<circle cx="389.09" cy="153.65" r="0.85" fill="#3a9a1c"/>
<circle cx="409.39" cy="127.93" r="0.85" fill="#3a9a1c"/>
<circle cx="389.76" cy="132.70" r="0.85" fill="#3a9a1c"/>
<circle cx="429.02" cy="123.17" r="0.85" fill="#3a9a1c"/>
<circle cx="448.65" cy="118.40" r="0.85" fill="#3a9a1c"/>
<circle cx="468.28" cy="113.63" r="0.85" fill="#3a9a1c"/>
<circle cx="472.84" cy="91.74" r="0.85" fill="#3a9a1c"/>
<circle cx="477.61" cy="111.37" r="0.85" fill="#3a9a1c"/>
<circle cx="414.16" cy="147.56" r="0.85" fill="#3a9a1c"/>
<circle cx="433.79" cy="142.80" r="0.85" fill="#3a9a1c"/>
<circle cx="453.42" cy="138.03" r="0.85" fill="#3a9a1c"/>
<circle cx="473.05" cy="133.26" r="0.85" fill="#3a9a1c"/>
<circle cx="487.91" cy="108.87" r="0.85" fill="#3a9a1c"/>
<circle cx="492.68" cy="128.50" r="0.85" fill="#3a9a1c"/>
<circle cx="417.32" cy="160.59" r="0.85" fill="#3a9a1c"/>
<circle cx="397.69" cy="165.35" r="0.85" fill="#3a9a1c"/>
<circle cx="436.95" cy="155.82" r="0.85" fill="#3a9a1c"/>
<circle cx="456.58" cy="151.05" r="0.85" fill="#3a9a1c"/>
<circle cx="476.21" cy="146.28" r="0.85" fill="#3a9a1c"/>
<circle cx="495.84" cy="141.52" r="0.85" fill="#3a9a1c"/>
<circle cx="481.29" cy="82.89" r="0.85" fill="#3a9a1c"/>
<circle cx="500.82" cy="78.15" r="0.85" fill="#3a9a1c"/>
<circle cx="502.38" cy="84.56" r="0.85" fill="#3a9a1c"/>
<circle cx="482.85" cy="89.31" r="0.85" fill="#3a9a1c"/>
<circle cx="520.36" cy="73.41" r="0.85" fill="#3a9a1c"/>
<circle cx="521.91" cy="79.82" r="0.85" fill="#3a9a1c"/>
<circle cx="482.95" cy="89.28" r="0.85" fill="#3a9a1c"/>
<circle cx="507.17" cy="104.08" r="0.85" fill="#3a9a1c"/>
<circle cx="511.92" cy="123.62" r="0.85" fill="#3a9a1c"/>
<circle cx="516.66" cy="143.15" r="0.85" fill="#3a9a1c"/>
<circle cx="497.18" cy="147.88" r="0.85" fill="#3a9a1c"/>
<circle cx="521.40" cy="162.68" r="0.85" fill="#3a9a1c"/>
<circle cx="501.92" cy="167.41" r="0.85" fill="#3a9a1c"/>
<circle cx="526.15" cy="182.21" r="0.85" fill="#3a9a1c"/>
<circle cx="506.66" cy="186.95" r="0.85" fill="#3a9a1c"/>
<circle cx="530.89" cy="201.75" r="0.85" fill="#3a9a1c"/>
<circle cx="511.41" cy="206.48" r="0.85" fill="#3a9a1c"/>
<circle cx="526.66" cy="99.35" r="0.85" fill="#3a9a1c"/>
<circle cx="531.40" cy="118.89" r="0.85" fill="#3a9a1c"/>
<circle cx="536.14" cy="138.42" r="0.85" fill="#3a9a1c"/>
<circle cx="540.89" cy="157.95" r="0.85" fill="#3a9a1c"/>
<circle cx="545.63" cy="177.48" r="0.85" fill="#3a9a1c"/>
<circle cx="550.37" cy="197.01" r="0.85" fill="#3a9a1c"/>
<circle cx="522.30" cy="79.73" r="0.85" fill="#3a9a1c"/>
<circle cx="525.32" cy="78.99" r="0.85" fill="#3a9a1c"/>
<circle cx="530.06" cy="98.53" r="0.85" fill="#3a9a1c"/>
<circle cx="534.80" cy="118.06" r="0.85" fill="#3a9a1c"/>
<circle cx="539.55" cy="137.59" r="0.85" fill="#3a9a1c"/>
<circle cx="536.53" cy="138.32" r="0.85" fill="#3a9a1c"/>
<circle cx="544.29" cy="157.12" r="0.85" fill="#3a9a1c"/>
<circle cx="541.28" cy="157.86" r="0.85" fill="#3a9a1c"/>
<circle cx="549.03" cy="176.66" r="0.85" fill="#3a9a1c"/>
<circle cx="553.78" cy="196.19" r="0.85" fill="#3a9a1c"/>
<circle cx="550.76" cy="196.92" r="0.85" fill="#3a9a1c"/>
<circle cx="418.65" cy="165.20" r="0.85" fill="#3a9a1c"/>
<circle cx="438.23" cy="160.45" r="0.85" fill="#3a9a1c"/>
<circle cx="443.04" cy="180.27" r="0.85" fill="#3a9a1c"/>
<circle cx="423.46" cy="185.03" r="0.85" fill="#3a9a1c"/>
<circle cx="457.81" cy="155.69" r="0.85" fill="#3a9a1c"/>
<circle cx="462.62" cy="175.52" r="0.85" fill="#3a9a1c"/>
<circle cx="477.39" cy="150.94" r="0.85" fill="#3a9a1c"/>
<circle cx="482.20" cy="170.76" r="0.85" fill="#3a9a1c"/>
<circle cx="496.97" cy="146.18" r="0.85" fill="#3a9a1c"/>
<circle cx="501.78" cy="166.01" r="0.85" fill="#3a9a1c"/>
<circle cx="487.00" cy="190.28" r="0.85" fill="#3a9a1c"/>
<circle cx="467.37" cy="195.05" r="0.85" fill="#3a9a1c"/>
<circle cx="491.74" cy="209.81" r="0.85" fill="#3a9a1c"/>
<circle cx="472.11" cy="214.58" r="0.85" fill="#3a9a1c"/>
<circle cx="490.58" cy="169.03" r="0.85" fill="#3a9a1c"/>
<circle cx="495.30" cy="188.47" r="0.85" fill="#3a9a1c"/>
<circle cx="487.04" cy="190.48" r="0.85" fill="#3a9a1c"/>
<circle cx="500.02" cy="207.90" r="0.85" fill="#3a9a1c"/>
<circle cx="472.84" cy="214.61" r="0.85" fill="#3a9a1c"/>
<circle cx="490.81" cy="210.24" r="0.85" fill="#3a9a1c"/>
<circle cx="492.04" cy="215.30" r="0.85" fill="#3a9a1c"/>
<circle cx="474.06" cy="219.66" r="0.85" fill="#3a9a1c"/>
<circle cx="496.63" cy="168.08" r="0.85" fill="#3a9a1c"/>
<circle cx="501.49" cy="166.90" r="0.85" fill="#3a9a1c"/>
<circle cx="506.21" cy="186.34" r="0.85" fill="#3a9a1c"/>
<circle cx="501.35" cy="187.52" r="0.85" fill="#3a9a1c"/>
<circle cx="510.93" cy="205.77" r="0.85" fill="#3a9a1c"/>
<circle cx="506.07" cy="206.95" r="0.85" fill="#3a9a1c"/>
<circle cx="429.52" cy="188.80" r="0.85" fill="#3a9a1c"/>
<circle cx="447.01" cy="184.55" r="0.85" fill="#3a9a1c"/>
<circle cx="448.19" cy="189.41" r="0.85" fill="#3a9a1c"/>
<circle cx="430.70" cy="193.66" r="0.85" fill="#3a9a1c"/>
<circle cx="426.06" cy="195.30" r="0.85" fill="#3a9a1c"/>
<circle cx="429.17" cy="194.55" r="0.85" fill="#3a9a1c"/>
<circle cx="433.98" cy="214.37" r="0.85" fill="#3a9a1c"/>
<circle cx="430.87" cy="215.13" r="0.85" fill="#3a9a1c"/>
<circle cx="438.80" cy="234.20" r="0.85" fill="#3a9a1c"/>
<circle cx="435.69" cy="234.95" r="0.85" fill="#3a9a1c"/>
<circle cx="443.61" cy="254.02" r="0.85" fill="#3a9a1c"/>
<circle cx="440.50" cy="254.77" r="0.85" fill="#3a9a1c"/>
<circle cx="430.34" cy="194.27" r="0.85" fill="#3a9a1c"/>
<circle cx="449.77" cy="189.55" r="0.85" fill="#3a9a1c"/>
<circle cx="454.63" cy="209.56" r="0.85" fill="#3a9a1c"/>
<circle cx="435.20" cy="214.28" r="0.85" fill="#3a9a1c"/>
<circle cx="459.49" cy="229.58" r="0.85" fill="#3a9a1c"/>
<circle cx="440.06" cy="234.30" r="0.85" fill="#3a9a1c"/>
<circle cx="458.32" cy="187.47" r="0.85" fill="#3a9a1c"/>
<circle cx="463.11" cy="207.20" r="0.85" fill="#3a9a1c"/>
<circle cx="467.90" cy="226.92" r="0.85" fill="#3a9a1c"/>
<circle cx="459.84" cy="228.88" r="0.85" fill="#3a9a1c"/>
<circle cx="368.13" cy="217.81" r="0.85" fill="#3a9a1c"/>
<circle cx="372.02" cy="216.86" r="0.85" fill="#3a9a1c"/>
<circle cx="376.74" cy="236.30" r="0.85" fill="#3a9a1c"/>
<circle cx="372.85" cy="237.24" r="0.85" fill="#3a9a1c"/>
<circle cx="381.46" cy="255.74" r="0.85" fill="#3a9a1c"/>
<circle cx="377.57" cy="256.68" r="0.85" fill="#3a9a1c"/>
<circle cx="386.18" cy="275.17" r="0.85" fill="#3a9a1c"/>
<circle cx="382.29" cy="276.11" r="0.85" fill="#3a9a1c"/>
<circle cx="384.65" cy="213.80" r="0.85" fill="#3a9a1c"/>
<circle cx="389.37" cy="233.23" r="0.85" fill="#3a9a1c"/>
<circle cx="394.09" cy="252.67" r="0.85" fill="#3a9a1c"/>
<circle cx="398.81" cy="272.10" r="0.85" fill="#3a9a1c"/>
<circle cx="404.19" cy="209.05" r="0.85" fill="#3a9a1c"/>
<circle cx="408.91" cy="228.49" r="0.85" fill="#3a9a1c"/>
<circle cx="413.63" cy="247.92" r="0.85" fill="#3a9a1c"/>
<circle cx="418.35" cy="267.36" r="0.85" fill="#3a9a1c"/>
<circle cx="399.37" cy="189.23" r="0.85" fill="#3a9a1c"/>
<circle cx="417.64" cy="184.79" r="0.85" fill="#3a9a1c"/>
<circle cx="422.38" cy="204.33" r="0.85" fill="#3a9a1c"/>
<circle cx="427.13" cy="223.86" r="0.85" fill="#3a9a1c"/>
<circle cx="431.87" cy="243.39" r="0.85" fill="#3a9a1c"/>
<circle cx="413.60" cy="247.83" r="0.85" fill="#3a9a1c"/>
<circle cx="436.62" cy="262.92" r="0.85" fill="#3a9a1c"/>
<circle cx="386.10" cy="287.54" r="0.85" fill="#3a9a1c"/>
<circle cx="406.02" cy="282.70" r="0.85" fill="#3a9a1c"/>
<circle cx="409.44" cy="296.79" r="0.85" fill="#3a9a1c"/>
<circle cx="389.52" cy="301.63" r="0.85" fill="#3a9a1c"/>
<circle cx="464.21" cy="249.02" r="0.85" fill="#3a9a1c"/>
<circle cx="444.78" cy="253.74" r="0.85" fill="#3a9a1c"/>
<circle cx="478.93" cy="224.86" r="0.85" fill="#3a9a1c"/>
<circle cx="483.65" cy="244.30" r="0.85" fill="#3a9a1c"/>
<circle cx="498.36" cy="220.14" r="0.85" fill="#3a9a1c"/>
<circle cx="503.08" cy="239.58" r="0.85" fill="#3a9a1c"/>
<circle cx="517.80" cy="215.42" r="0.85" fill="#3a9a1c"/>
<circle cx="522.52" cy="234.86" r="0.85" fill="#3a9a1c"/>
<circle cx="537.23" cy="210.70" r="0.85" fill="#3a9a1c"/>
<circle cx="541.95" cy="230.14" r="0.85" fill="#3a9a1c"/>
<circle cx="556.67" cy="205.98" r="0.85" fill="#3a9a1c"/>
<circle cx="561.39" cy="225.42" r="0.85" fill="#3a9a1c"/>
<circle cx="468.93" cy="268.45" r="0.85" fill="#3a9a1c"/>
<circle cx="449.50" cy="273.17" r="0.85" fill="#3a9a1c"/>
<circle cx="488.37" cy="263.73" r="0.85" fill="#3a9a1c"/>
<circle cx="507.80" cy="259.01" r="0.85" fill="#3a9a1c"/>
<circle cx="527.24" cy="254.29" r="0.85" fill="#3a9a1c"/>
<circle cx="546.67" cy="249.57" r="0.85" fill="#3a9a1c"/>
<circle cx="428.27" cy="270.51" r="0.85" fill="#3a9a1c"/>
<circle cx="447.70" cy="265.79" r="0.85" fill="#3a9a1c"/>
<circle cx="430.06" cy="277.89" r="0.85" fill="#3a9a1c"/>
<circle cx="413.32" cy="282.27" r="0.85" fill="#3a9a1c"/>
<circle cx="416.53" cy="281.49" r="0.85" fill="#3a9a1c"/>
<circle cx="421.18" cy="300.63" r="0.85" fill="#3a9a1c"/>
<circle cx="417.97" cy="301.41" r="0.85" fill="#3a9a1c"/>
<circle cx="430.13" cy="278.18" r="0.85" fill="#3a9a1c"/>
<circle cx="434.78" cy="297.33" r="0.85" fill="#3a9a1c"/>
<circle cx="454.22" cy="292.61" r="0.85" fill="#3a9a1c"/>
<circle cx="473.65" cy="287.89" r="0.85" fill="#3a9a1c"/>
<circle cx="493.09" cy="283.17" r="0.85" fill="#3a9a1c"/>
<circle cx="512.52" cy="278.45" r="0.85" fill="#3a9a1c"/>
<circle cx="508.41" cy="259.38" r="0.85" fill="#3a9a1c"/>
<circle cx="528.33" cy="254.54" r="0.85" fill="#3a9a1c"/>
<circle cx="531.51" cy="267.66" r="0.85" fill="#3a9a1c"/>
<circle cx="511.59" cy="272.50" r="0.85" fill="#3a9a1c"/>
<circle cx="512.61" cy="272.46" r="0.85" fill="#3a9a1c"/>
<circle cx="532.46" cy="271.55" r="0.85" fill="#3a9a1c"/>
<circle cx="513.51" cy="276.15" r="0.85" fill="#3a9a1c"/>
<circle cx="513.38" cy="277.73" r="0.85" fill="#3a9a1c"/>
<circle cx="519.21" cy="276.31" r="0.85" fill="#3a9a1c"/>
<circle cx="524.04" cy="296.23" r="0.85" fill="#3a9a1c"/>
<circle cx="518.21" cy="297.65" r="0.85" fill="#3a9a1c"/>
<circle cx="395.91" cy="306.77" r="0.85" fill="#3a9a1c"/>
<circle cx="415.35" cy="302.05" r="0.85" fill="#3a9a1c"/>
<circle cx="420.07" cy="321.48" r="0.85" fill="#3a9a1c"/>
<circle cx="400.63" cy="326.20" r="0.85" fill="#3a9a1c"/>
<circle cx="439.50" cy="316.76" r="0.85" fill="#3a9a1c"/>
<circle cx="458.94" cy="312.04" r="0.85" fill="#3a9a1c"/>
<circle cx="478.37" cy="307.32" r="0.85" fill="#3a9a1c"/>
<circle cx="497.81" cy="302.60" r="0.85" fill="#3a9a1c"/>
<circle cx="517.24" cy="297.88" r="0.85" fill="#3a9a1c"/>
<circle cx="377.92" cy="313.19" r="0.85" fill="#3a9a1c"/>
<circle cx="382.29" cy="312.13" r="0.85" fill="#3a9a1c"/>
<circle cx="386.54" cy="329.62" r="0.85" fill="#3a9a1c"/>
<circle cx="382.17" cy="330.69" r="0.85" fill="#3a9a1c"/>
<circle cx="382.43" cy="310.56" r="0.85" fill="#3a9a1c"/>
<circle cx="396.03" cy="307.25" r="0.85" fill="#3a9a1c"/>
<circle cx="387.03" cy="329.51" r="0.85" fill="#3a9a1c"/>
<circle cx="499.02" cy="303.34" r="0.85" fill="#3a9a1c"/>
<circle cx="517.77" cy="298.78" r="0.85" fill="#3a9a1c"/>
<circle cx="519.19" cy="304.61" r="0.85" fill="#3a9a1c"/>
<circle cx="500.43" cy="309.17" r="0.85" fill="#3a9a1c"/>
<circle cx="380.71" cy="331.04" r="0.85" fill="#3a9a1c"/>
<circle cx="400.24" cy="326.30" r="0.85" fill="#3a9a1c"/>
<circle cx="404.96" cy="345.73" r="0.85" fill="#3a9a1c"/>
<circle cx="385.43" cy="350.47" r="0.85" fill="#3a9a1c"/>
<circle cx="424.50" cy="340.99" r="0.85" fill="#3a9a1c"/>
<circle cx="444.03" cy="336.24" r="0.85" fill="#3a9a1c"/>
<circle cx="463.56" cy="331.50" r="0.85" fill="#3a9a1c"/>
<circle cx="483.09" cy="326.76" r="0.85" fill="#3a9a1c"/>
<circle cx="482.26" cy="306.38" r="0.85" fill="#3a9a1c"/>
<circle cx="487.05" cy="326.10" r="0.85" fill="#3a9a1c"/>
<circle cx="408.13" cy="358.34" r="0.85" fill="#3a9a1c"/>
<circle cx="388.50" cy="363.11" r="0.85" fill="#3a9a1c"/>
<circle cx="424.69" cy="340.94" r="0.85" fill="#3a9a1c"/>
<circle cx="427.76" cy="353.57" r="0.85" fill="#3a9a1c"/>
<circle cx="409.02" cy="358.64" r="0.85" fill="#3a9a1c"/>
<circle cx="427.49" cy="354.15" r="0.85" fill="#3a9a1c"/>
<circle cx="428.55" cy="358.53" r="0.85" fill="#3a9a1c"/>
<circle cx="410.09" cy="363.01" r="0.85" fill="#3a9a1c"/>
<circle cx="448.94" cy="355.63" r="0.85" fill="#3a9a1c"/>
<circle cx="429.51" cy="360.35" r="0.85" fill="#3a9a1c"/>
<circle cx="468.38" cy="350.91" r="0.85" fill="#3a9a1c"/>
<circle cx="463.89" cy="332.45" r="0.85" fill="#3a9a1c"/>
<circle cx="483.33" cy="327.73" r="0.85" fill="#3a9a1c"/>
<circle cx="485.57" cy="336.96" r="0.85" fill="#3a9a1c"/>
<circle cx="466.13" cy="341.68" r="0.85" fill="#3a9a1c"/>
<circle cx="467.22" cy="341.93" r="0.85" fill="#3a9a1c"/>
<circle cx="485.69" cy="337.45" r="0.85" fill="#3a9a1c"/>
<circle cx="486.63" cy="341.33" r="0.85" fill="#3a9a1c"/>
<circle cx="468.17" cy="345.82" r="0.85" fill="#3a9a1c"/>
<circle cx="450.00" cy="360.00" r="0.85" fill="#3a9a1c"/>
<circle cx="430.57" cy="364.72" r="0.85" fill="#3a9a1c"/>
<circle cx="449.72" cy="355.44" r="0.85" fill="#3a9a1c"/>
<circle cx="470.38" cy="359.17" r="0.85" fill="#3a9a1c"/>
<circle cx="451.73" cy="363.70" r="0.85" fill="#3a9a1c"/>
<g transform="translate(220.35,229.33) rotate(0.00)" fill="#2a002a" opacity="0.62"><rect x="-1.6" y="-2.4" width="1.1" height="4.5"/><rect x="-0.3" y="-1.6" width="1.6" height="1"/><rect x="-0.3" y="0.2" width="1.6" height="1"/></g>
<g transform="translate(220.35,249.38) rotate(0.00)" fill="#2a002a" opacity="0.62"><rect x="-1.6" y="-2.4" width="1.1" height="4.5"/><rect x="-0.3" y="-1.6" width="1.6" height="1"/><rect x="-0.3" y="0.2" width="1.6" height="1"/></g>
<g transform="translate(220.35,269.43) rotate(0.00)" fill="#2a002a" opacity="0.62"><rect x="-1.6" y="-2.4" width="1.1" height="4.5"/><rect x="-0.3" y="-1.6" width="1.6" height="1"/><rect x="-0.3" y="0.2" width="1.6" height="1"/></g>
<g transform="translate(240.45,229.33) rotate(0.00)" fill="#2a002a" opacity="0.62"><rect x="-1.6" y="-2.4" width="1.1" height="4.5"/><rect x="-0.3" y="-1.6" width="1.6" height="1"/><rect x="-0.3" y="0.2" width="1.6" height="1"/></g>
<g transform="translate(240.45,249.38) rotate(0.00)" fill="#2a002a" opacity="0.62"><rect x="-1.6" y="-2.4" width="1.1" height="4.5"/><rect x="-0.3" y="-1.6" width="1.6" height="1"/><rect x="-0.3" y="0.2" width="1.6" height="1"/></g>
<g transform="translate(240.45,269.43) rotate(0.00)" fill="#2a002a" opacity="0.62"><rect x="-1.6" y="-2.4" width="1.1" height="4.5"/><rect x="-0.3" y="-1.6" width="1.6" height="1"/><rect x="-0.3" y="0.2" width="1.6" height="1"/></g>
<g transform="translate(260.55,229.33) rotate(0.00)" fill="#2a002a" opacity="0.62"><rect x="-1.6" y="-2.4" width="1.1" height="4.5"/><rect x="-0.3" y="-1.6" width="1.6" height="1"/><rect x="-0.3" y="0.2" width="1.6" height="1"/></g>
<g transform="translate(260.55,249.38) rotate(0.00)" fill="#2a002a" opacity="0.62"><rect x="-1.6" y="-2.4" width="1.1" height="4.5"/><rect x="-0.3" y="-1.6" width="1.6" height="1"/><rect x="-0.3" y="0.2" width="1.6" height="1"/></g>
<g transform="translate(260.55,269.43) rotate(0.00)" fill="#2a002a" opacity="0.62"><rect x="-1.6" y="-2.4" width="1.1" height="4.5"/><rect x="-0.3" y="-1.6" width="1.6" height="1"/><rect x="-0.3" y="0.2" width="1.6" height="1"/></g>
<g transform="translate(280.65,229.33) rotate(0.00)" fill="#2a002a" opacity="0.62"><rect x="-1.6" y="-2.4" width="1.1" height="4.5"/><rect x="-0.3" y="-1.6" width="1.6" height="1"/><rect x="-0.3" y="0.2" width="1.6" height="1"/></g>
<g transform="translate(280.65,249.38) rotate(0.00)" fill="#2a002a" opacity="0.62"><rect x="-1.6" y="-2.4" width="1.1" height="4.5"/><rect x="-0.3" y="-1.6" width="1.6" height="1"/><rect x="-0.3" y="0.2" width="1.6" height="1"/></g>
<g transform="translate(280.65,269.43) rotate(0.00)" fill="#2a002a" opacity="0.62"><rect x="-1.6" y="-2.4" width="1.1" height="4.5"/><rect x="-0.3" y="-1.6" width="1.6" height="1"/><rect x="-0.3" y="0.2" width="1.6" height="1"/></g>
<g transform="translate(300.75,232.40) rotate(0.00)" fill="#3a0000" opacity="0.7"><rect x="-2.2" y="-0.5" width="4.4" height="0.7"/><rect x="-1" y="0.4" width="2" height="0.6"/></g>
<g transform="translate(300.75,249.53) rotate(0.00)" fill="#2a002a" opacity="0.62"><rect x="-1.6" y="-2.4" width="1.1" height="4.5"/><rect x="-0.3" y="-1.6" width="1.6" height="1"/><rect x="-0.3" y="0.2" width="1.6" height="1"/></g>
<g transform="translate(300.75,269.58) rotate(0.00)" fill="#2a002a" opacity="0.62"><rect x="-1.6" y="-2.4" width="1.1" height="4.5"/><rect x="-0.3" y="-1.6" width="1.6" height="1"/><rect x="-0.3" y="0.2" width="1.6" height="1"/></g>
<g transform="translate(320.85,229.33) rotate(0.00)" fill="#2a002a" opacity="0.62"><rect x="-1.6" y="-2.4" width="1.1" height="4.5"/><rect x="-0.3" y="-1.6" width="1.6" height="1"/><rect x="-0.3" y="0.2" width="1.6" height="1"/></g>
<g transform="translate(320.85,249.38) rotate(0.00)" fill="#2a002a" opacity="0.62"><rect x="-1.6" y="-2.4" width="1.1" height="4.5"/><rect x="-0.3" y="-1.6" width="1.6" height="1"/><rect x="-0.3" y="0.2" width="1.6" height="1"/></g>
<g transform="translate(340.95,229.33) rotate(0.00)" fill="#2a002a" opacity="0.62"><rect x="-1.6" y="-2.4" width="1.1" height="4.5"/><rect x="-0.3" y="-1.6" width="1.6" height="1"/><rect x="-0.3" y="0.2" width="1.6" height="1"/></g>
<g transform="translate(340.95,249.38) rotate(0.00)" fill="#2a002a" opacity="0.62"><rect x="-1.6" y="-2.4" width="1.1" height="4.5"/><rect x="-0.3" y="-1.6" width="1.6" height="1"/><rect x="-0.3" y="0.2" width="1.6" height="1"/></g>
<g transform="translate(320.85,266.35) rotate(0.00)" fill="#3a0000" opacity="0.7"><rect x="-2.2" y="-0.5" width="4.4" height="0.7"/><rect x="-1" y="0.4" width="2" height="0.6"/></g>
<g transform="translate(340.95,269.60) rotate(0.00)" fill="#2a002a" opacity="0.62"><rect x="-1.6" y="-2.4" width="1.1" height="4.5"/><rect x="-0.3" y="-1.6" width="1.6" height="1"/><rect x="-0.3" y="0.2" width="1.6" height="1"/></g>
<g transform="translate(355.90,229.40) rotate(0.00)" fill="#202020" opacity="0.7"><rect x="-2.2" y="-0.5" width="4.4" height="0.7"/><rect x="-1" y="0.4" width="2" height="0.6"/></g>
<g transform="translate(358.00,249.45) rotate(0.00)" fill="#3a0000" opacity="0.7"><rect x="-2.2" y="-0.5" width="4.4" height="0.7"/><rect x="-1" y="0.4" width="2" height="0.6"/></g>
<g transform="translate(361.30,269.60) rotate(0.00)" fill="#2a002a" opacity="0.62"><rect x="-1.6" y="-2.4" width="1.1" height="4.5"/><rect x="-0.3" y="-1.6" width="1.6" height="1"/><rect x="-0.3" y="0.2" width="1.6" height="1"/></g>
<g transform="translate(340.95,283.70) rotate(0.00)" fill="#202020" opacity="0.7"><rect x="-2.2" y="-0.5" width="4.4" height="0.7"/><rect x="-1" y="0.4" width="2" height="0.6"/></g>
<g transform="translate(361.30,283.85) rotate(0.00)" fill="#202020" opacity="0.7"><rect x="-2.2" y="-0.5" width="4.4" height="0.7"/><rect x="-1" y="0.4" width="2" height="0.6"/></g>
<g transform="translate(220.35,292.95) rotate(0.00)" fill="#3a0000" opacity="0.7"><rect x="-2.2" y="-0.5" width="4.4" height="0.7"/><rect x="-1" y="0.4" width="2" height="0.6"/></g>
<g transform="translate(240.45,292.95) rotate(0.00)" fill="#3a0000" opacity="0.7"><rect x="-2.2" y="-0.5" width="4.4" height="0.7"/><rect x="-1" y="0.4" width="2" height="0.6"/></g>
<g transform="translate(260.55,292.95) rotate(0.00)" fill="#3a0000" opacity="0.7"><rect x="-2.2" y="-0.5" width="4.4" height="0.7"/><rect x="-1" y="0.4" width="2" height="0.6"/></g>
<g transform="translate(284.00,290.95) rotate(0.00)" fill="#3a0000" opacity="0.7"><rect x="-2.2" y="-0.5" width="4.4" height="0.7"/><rect x="-1" y="0.4" width="2" height="0.6"/></g>
<g transform="translate(300.75,289.60) rotate(0.00)" fill="#2a002a" opacity="0.62"><rect x="-1.6" y="-2.4" width="1.1" height="4.5"/><rect x="-0.3" y="-1.6" width="1.6" height="1"/><rect x="-0.3" y="0.2" width="1.6" height="1"/></g>
<g transform="translate(317.55,289.60) rotate(0.00)" fill="#3a0000" opacity="0.7"><rect x="-2.2" y="-0.5" width="4.4" height="0.7"/><rect x="-1" y="0.4" width="2" height="0.6"/></g>
<g transform="translate(220.35,309.62) rotate(0.00)" fill="#2a002a" opacity="0.62"><rect x="-1.6" y="-2.4" width="1.1" height="4.5"/><rect x="-0.3" y="-1.6" width="1.6" height="1"/><rect x="-0.3" y="0.2" width="1.6" height="1"/></g>
<g transform="translate(220.35,329.68) rotate(0.00)" fill="#2a002a" opacity="0.62"><rect x="-1.6" y="-2.4" width="1.1" height="4.5"/><rect x="-0.3" y="-1.6" width="1.6" height="1"/><rect x="-0.3" y="0.2" width="1.6" height="1"/></g>
<g transform="translate(220.35,349.73) rotate(0.00)" fill="#2a002a" opacity="0.62"><rect x="-1.6" y="-2.4" width="1.1" height="4.5"/><rect x="-0.3" y="-1.6" width="1.6" height="1"/><rect x="-0.3" y="0.2" width="1.6" height="1"/></g>
<g transform="translate(240.45,309.62) rotate(0.00)" fill="#2a002a" opacity="0.62"><rect x="-1.6" y="-2.4" width="1.1" height="4.5"/><rect x="-0.3" y="-1.6" width="1.6" height="1"/><rect x="-0.3" y="0.2" width="1.6" height="1"/></g>
<g transform="translate(240.45,329.68) rotate(0.00)" fill="#2a002a" opacity="0.62"><rect x="-1.6" y="-2.4" width="1.1" height="4.5"/><rect x="-0.3" y="-1.6" width="1.6" height="1"/><rect x="-0.3" y="0.2" width="1.6" height="1"/></g>
<g transform="translate(240.45,349.73) rotate(0.00)" fill="#2a002a" opacity="0.62"><rect x="-1.6" y="-2.4" width="1.1" height="4.5"/><rect x="-0.3" y="-1.6" width="1.6" height="1"/><rect x="-0.3" y="0.2" width="1.6" height="1"/></g>
<g transform="translate(260.55,309.62) rotate(0.00)" fill="#2a002a" opacity="0.62"><rect x="-1.6" y="-2.4" width="1.1" height="4.5"/><rect x="-0.3" y="-1.6" width="1.6" height="1"/><rect x="-0.3" y="0.2" width="1.6" height="1"/></g>
<g transform="translate(260.55,329.68) rotate(0.00)" fill="#2a002a" opacity="0.62"><rect x="-1.6" y="-2.4" width="1.1" height="4.5"/><rect x="-0.3" y="-1.6" width="1.6" height="1"/><rect x="-0.3" y="0.2" width="1.6" height="1"/></g>
<g transform="translate(260.55,349.73) rotate(0.00)" fill="#2a002a" opacity="0.62"><rect x="-1.6" y="-2.4" width="1.1" height="4.5"/><rect x="-0.3" y="-1.6" width="1.6" height="1"/><rect x="-0.3" y="0.2" width="1.6" height="1"/></g>
<g transform="translate(280.65,309.62) rotate(0.00)" fill="#2a002a" opacity="0.62"><rect x="-1.6" y="-2.4" width="1.1" height="4.5"/><rect x="-0.3" y="-1.6" width="1.6" height="1"/><rect x="-0.3" y="0.2" width="1.6" height="1"/></g>
<g transform="translate(280.65,329.68) rotate(0.00)" fill="#2a002a" opacity="0.62"><rect x="-1.6" y="-2.4" width="1.1" height="4.5"/><rect x="-0.3" y="-1.6" width="1.6" height="1"/><rect x="-0.3" y="0.2" width="1.6" height="1"/></g>
<g transform="translate(280.65,349.73) rotate(0.00)" fill="#2a002a" opacity="0.62"><rect x="-1.6" y="-2.4" width="1.1" height="4.5"/><rect x="-0.3" y="-1.6" width="1.6" height="1"/><rect x="-0.3" y="0.2" width="1.6" height="1"/></g>
<g transform="translate(300.75,309.62) rotate(0.00)" fill="#2a002a" opacity="0.62"><rect x="-1.6" y="-2.4" width="1.1" height="4.5"/><rect x="-0.3" y="-1.6" width="1.6" height="1"/><rect x="-0.3" y="0.2" width="1.6" height="1"/></g>
<g transform="translate(300.75,329.68) rotate(0.00)" fill="#2a002a" opacity="0.62"><rect x="-1.6" y="-2.4" width="1.1" height="4.5"/><rect x="-0.3" y="-1.6" width="1.6" height="1"/><rect x="-0.3" y="0.2" width="1.6" height="1"/></g>
<g transform="translate(300.75,349.73) rotate(0.00)" fill="#2a002a" opacity="0.62"><rect x="-1.6" y="-2.4" width="1.1" height="4.5"/><rect x="-0.3" y="-1.6" width="1.6" height="1"/><rect x="-0.3" y="0.2" width="1.6" height="1"/></g>
<g transform="translate(317.55,309.62) rotate(0.00)" fill="#3a0000" opacity="0.7"><rect x="-2.2" y="-0.5" width="4.4" height="0.7"/><rect x="-1" y="0.4" width="2" height="0.6"/></g>
<g transform="translate(317.55,329.68) rotate(0.00)" fill="#3a0000" opacity="0.7"><rect x="-2.2" y="-0.5" width="4.4" height="0.7"/><rect x="-1" y="0.4" width="2" height="0.6"/></g>
<g transform="translate(317.55,349.73) rotate(0.00)" fill="#3a0000" opacity="0.7"><rect x="-2.2" y="-0.5" width="4.4" height="0.7"/><rect x="-1" y="0.4" width="2" height="0.6"/></g>
<g transform="translate(337.98,302.48) rotate(0.00)" fill="#2a002a" opacity="0.62"><rect x="-1.6" y="-2.4" width="1.1" height="4.5"/><rect x="-0.3" y="-1.6" width="1.6" height="1"/><rect x="-0.3" y="0.2" width="1.6" height="1"/></g>
<g transform="translate(337.98,322.42) rotate(0.00)" fill="#2a002a" opacity="0.62"><rect x="-1.6" y="-2.4" width="1.1" height="4.5"/><rect x="-0.3" y="-1.6" width="1.6" height="1"/><rect x="-0.3" y="0.2" width="1.6" height="1"/></g>
<g transform="translate(337.98,342.38) rotate(0.00)" fill="#2a002a" opacity="0.62"><rect x="-1.6" y="-2.4" width="1.1" height="4.5"/><rect x="-0.3" y="-1.6" width="1.6" height="1"/><rect x="-0.3" y="0.2" width="1.6" height="1"/></g>
<g transform="translate(358.12,302.48) rotate(0.00)" fill="#2a002a" opacity="0.62"><rect x="-1.6" y="-2.4" width="1.1" height="4.5"/><rect x="-0.3" y="-1.6" width="1.6" height="1"/><rect x="-0.3" y="0.2" width="1.6" height="1"/></g>
<g transform="translate(358.12,322.42) rotate(0.00)" fill="#2a002a" opacity="0.62"><rect x="-1.6" y="-2.4" width="1.1" height="4.5"/><rect x="-0.3" y="-1.6" width="1.6" height="1"/><rect x="-0.3" y="0.2" width="1.6" height="1"/></g>
<g transform="translate(358.12,342.38) rotate(0.00)" fill="#2a002a" opacity="0.62"><rect x="-1.6" y="-2.4" width="1.1" height="4.5"/><rect x="-0.3" y="-1.6" width="1.6" height="1"/><rect x="-0.3" y="0.2" width="1.6" height="1"/></g>
<g transform="translate(337.98,358.95) rotate(0.00)" fill="#3a0000" opacity="0.7"><rect x="-2.2" y="-0.5" width="4.4" height="0.7"/><rect x="-1" y="0.4" width="2" height="0.6"/></g>
<g transform="translate(358.12,358.95) rotate(0.00)" fill="#3a0000" opacity="0.7"><rect x="-2.2" y="-0.5" width="4.4" height="0.7"/><rect x="-1" y="0.4" width="2" height="0.6"/></g>
<g transform="translate(393.81,106.56) rotate(-13.65)" fill="#202020" opacity="0.7"><rect x="-2.2" y="-0.5" width="4.4" height="0.7"/><rect x="-1" y="0.4" width="2" height="0.6"/></g>
<g transform="translate(413.44,101.79) rotate(-13.65)" fill="#202020" opacity="0.7"><rect x="-2.2" y="-0.5" width="4.4" height="0.7"/><rect x="-1" y="0.4" width="2" height="0.6"/></g>
<g transform="translate(433.06,97.02) rotate(-13.65)" fill="#202020" opacity="0.7"><rect x="-2.2" y="-0.5" width="4.4" height="0.7"/><rect x="-1" y="0.4" width="2" height="0.6"/></g>
<g transform="translate(452.69,92.26) rotate(-13.65)" fill="#202020" opacity="0.7"><rect x="-2.2" y="-0.5" width="4.4" height="0.7"/><rect x="-1" y="0.4" width="2" height="0.6"/></g>
<g transform="translate(397.19,120.50) rotate(-13.65)" fill="#2a002a" opacity="0.62"><rect x="-1.6" y="-2.4" width="1.1" height="4.5"/><rect x="-0.3" y="-1.6" width="1.6" height="1"/><rect x="-0.3" y="0.2" width="1.6" height="1"/></g>
<g transform="translate(416.82,115.74) rotate(-13.65)" fill="#2a002a" opacity="0.62"><rect x="-1.6" y="-2.4" width="1.1" height="4.5"/><rect x="-0.3" y="-1.6" width="1.6" height="1"/><rect x="-0.3" y="0.2" width="1.6" height="1"/></g>
<g transform="translate(436.45,110.97) rotate(-13.65)" fill="#2a002a" opacity="0.62"><rect x="-1.6" y="-2.4" width="1.1" height="4.5"/><rect x="-0.3" y="-1.6" width="1.6" height="1"/><rect x="-0.3" y="0.2" width="1.6" height="1"/></g>
<g transform="translate(456.08,106.20) rotate(-13.65)" fill="#2a002a" opacity="0.62"><rect x="-1.6" y="-2.4" width="1.1" height="4.5"/><rect x="-0.3" y="-1.6" width="1.6" height="1"/><rect x="-0.3" y="0.2" width="1.6" height="1"/></g>
<g transform="translate(470.61,102.67) rotate(-13.65)" fill="#202020" opacity="0.7"><rect x="-2.2" y="-0.5" width="4.4" height="0.7"/><rect x="-1" y="0.4" width="2" height="0.6"/></g>
<g transform="translate(401.96,140.13) rotate(-13.65)" fill="#2a002a" opacity="0.62"><rect x="-1.6" y="-2.4" width="1.1" height="4.5"/><rect x="-0.3" y="-1.6" width="1.6" height="1"/><rect x="-0.3" y="0.2" width="1.6" height="1"/></g>
<g transform="translate(421.59,135.37) rotate(-13.65)" fill="#2a002a" opacity="0.62"><rect x="-1.6" y="-2.4" width="1.1" height="4.5"/><rect x="-0.3" y="-1.6" width="1.6" height="1"/><rect x="-0.3" y="0.2" width="1.6" height="1"/></g>
<g transform="translate(441.22,130.60) rotate(-13.65)" fill="#2a002a" opacity="0.62"><rect x="-1.6" y="-2.4" width="1.1" height="4.5"/><rect x="-0.3" y="-1.6" width="1.6" height="1"/><rect x="-0.3" y="0.2" width="1.6" height="1"/></g>
<g transform="translate(460.85,125.83) rotate(-13.65)" fill="#2a002a" opacity="0.62"><rect x="-1.6" y="-2.4" width="1.1" height="4.5"/><rect x="-0.3" y="-1.6" width="1.6" height="1"/><rect x="-0.3" y="0.2" width="1.6" height="1"/></g>
<g transform="translate(480.48,121.06) rotate(-13.65)" fill="#2a002a" opacity="0.62"><rect x="-1.6" y="-2.4" width="1.1" height="4.5"/><rect x="-0.3" y="-1.6" width="1.6" height="1"/><rect x="-0.3" y="0.2" width="1.6" height="1"/></g>
<g transform="translate(405.92,156.46) rotate(-13.65)" fill="#3a0000" opacity="0.7"><rect x="-2.2" y="-0.5" width="4.4" height="0.7"/><rect x="-1" y="0.4" width="2" height="0.6"/></g>
<g transform="translate(425.55,151.69) rotate(-13.65)" fill="#3a0000" opacity="0.7"><rect x="-2.2" y="-0.5" width="4.4" height="0.7"/><rect x="-1" y="0.4" width="2" height="0.6"/></g>
<g transform="translate(445.18,146.92) rotate(-13.65)" fill="#3a0000" opacity="0.7"><rect x="-2.2" y="-0.5" width="4.4" height="0.7"/><rect x="-1" y="0.4" width="2" height="0.6"/></g>
<g transform="translate(464.81,142.16) rotate(-13.65)" fill="#3a0000" opacity="0.7"><rect x="-2.2" y="-0.5" width="4.4" height="0.7"/><rect x="-1" y="0.4" width="2" height="0.6"/></g>
<g transform="translate(484.44,137.39) rotate(-13.65)" fill="#3a0000" opacity="0.7"><rect x="-2.2" y="-0.5" width="4.4" height="0.7"/><rect x="-1" y="0.4" width="2" height="0.6"/></g>
<g transform="translate(495.06,96.68) rotate(-13.65)" fill="#2a002a" opacity="0.62"><rect x="-1.6" y="-2.4" width="1.1" height="4.5"/><rect x="-0.3" y="-1.6" width="1.6" height="1"/><rect x="-0.3" y="0.2" width="1.6" height="1"/></g>
<g transform="translate(499.80,116.22) rotate(-13.65)" fill="#2a002a" opacity="0.62"><rect x="-1.6" y="-2.4" width="1.1" height="4.5"/><rect x="-0.3" y="-1.6" width="1.6" height="1"/><rect x="-0.3" y="0.2" width="1.6" height="1"/></g>
<g transform="translate(504.55,135.75) rotate(-13.65)" fill="#2a002a" opacity="0.62"><rect x="-1.6" y="-2.4" width="1.1" height="4.5"/><rect x="-0.3" y="-1.6" width="1.6" height="1"/><rect x="-0.3" y="0.2" width="1.6" height="1"/></g>
<g transform="translate(509.29,155.28) rotate(-13.65)" fill="#2a002a" opacity="0.62"><rect x="-1.6" y="-2.4" width="1.1" height="4.5"/><rect x="-0.3" y="-1.6" width="1.6" height="1"/><rect x="-0.3" y="0.2" width="1.6" height="1"/></g>
<g transform="translate(514.03,174.81) rotate(-13.65)" fill="#2a002a" opacity="0.62"><rect x="-1.6" y="-2.4" width="1.1" height="4.5"/><rect x="-0.3" y="-1.6" width="1.6" height="1"/><rect x="-0.3" y="0.2" width="1.6" height="1"/></g>
<g transform="translate(518.78,194.35) rotate(-13.65)" fill="#2a002a" opacity="0.62"><rect x="-1.6" y="-2.4" width="1.1" height="4.5"/><rect x="-0.3" y="-1.6" width="1.6" height="1"/><rect x="-0.3" y="0.2" width="1.6" height="1"/></g>
<g transform="translate(514.54,91.95) rotate(-13.65)" fill="#2a002a" opacity="0.62"><rect x="-1.6" y="-2.4" width="1.1" height="4.5"/><rect x="-0.3" y="-1.6" width="1.6" height="1"/><rect x="-0.3" y="0.2" width="1.6" height="1"/></g>
<g transform="translate(519.29,111.49) rotate(-13.65)" fill="#2a002a" opacity="0.62"><rect x="-1.6" y="-2.4" width="1.1" height="4.5"/><rect x="-0.3" y="-1.6" width="1.6" height="1"/><rect x="-0.3" y="0.2" width="1.6" height="1"/></g>
<g transform="translate(524.03,131.02) rotate(-13.65)" fill="#2a002a" opacity="0.62"><rect x="-1.6" y="-2.4" width="1.1" height="4.5"/><rect x="-0.3" y="-1.6" width="1.6" height="1"/><rect x="-0.3" y="0.2" width="1.6" height="1"/></g>
<g transform="translate(528.77,150.55) rotate(-13.65)" fill="#2a002a" opacity="0.62"><rect x="-1.6" y="-2.4" width="1.1" height="4.5"/><rect x="-0.3" y="-1.6" width="1.6" height="1"/><rect x="-0.3" y="0.2" width="1.6" height="1"/></g>
<g transform="translate(533.52,170.08) rotate(-13.65)" fill="#2a002a" opacity="0.62"><rect x="-1.6" y="-2.4" width="1.1" height="4.5"/><rect x="-0.3" y="-1.6" width="1.6" height="1"/><rect x="-0.3" y="0.2" width="1.6" height="1"/></g>
<g transform="translate(538.26,189.61) rotate(-13.65)" fill="#2a002a" opacity="0.62"><rect x="-1.6" y="-2.4" width="1.1" height="4.5"/><rect x="-0.3" y="-1.6" width="1.6" height="1"/><rect x="-0.3" y="0.2" width="1.6" height="1"/></g>
<g transform="translate(430.84,172.74) rotate(-13.65)" fill="#2a002a" opacity="0.62"><rect x="-1.6" y="-2.4" width="1.1" height="4.5"/><rect x="-0.3" y="-1.6" width="1.6" height="1"/><rect x="-0.3" y="0.2" width="1.6" height="1"/></g>
<g transform="translate(450.43,167.98) rotate(-13.65)" fill="#2a002a" opacity="0.62"><rect x="-1.6" y="-2.4" width="1.1" height="4.5"/><rect x="-0.3" y="-1.6" width="1.6" height="1"/><rect x="-0.3" y="0.2" width="1.6" height="1"/></g>
<g transform="translate(470.01,163.23) rotate(-13.65)" fill="#2a002a" opacity="0.62"><rect x="-1.6" y="-2.4" width="1.1" height="4.5"/><rect x="-0.3" y="-1.6" width="1.6" height="1"/><rect x="-0.3" y="0.2" width="1.6" height="1"/></g>
<g transform="translate(489.59,158.47) rotate(-13.65)" fill="#2a002a" opacity="0.62"><rect x="-1.6" y="-2.4" width="1.1" height="4.5"/><rect x="-0.3" y="-1.6" width="1.6" height="1"/><rect x="-0.3" y="0.2" width="1.6" height="1"/></g>
<g transform="translate(474.81,182.90) rotate(-13.65)" fill="#2a002a" opacity="0.62"><rect x="-1.6" y="-2.4" width="1.1" height="4.5"/><rect x="-0.3" y="-1.6" width="1.6" height="1"/><rect x="-0.3" y="0.2" width="1.6" height="1"/></g>
<g transform="translate(479.55,202.43) rotate(-13.65)" fill="#2a002a" opacity="0.62"><rect x="-1.6" y="-2.4" width="1.1" height="4.5"/><rect x="-0.3" y="-1.6" width="1.6" height="1"/><rect x="-0.3" y="0.2" width="1.6" height="1"/></g>
<g transform="translate(488.81,179.76) rotate(-13.65)" fill="#202020" opacity="0.7"><rect x="-2.2" y="-0.5" width="4.4" height="0.7"/><rect x="-1" y="0.4" width="2" height="0.6"/></g>
<g transform="translate(493.53,199.19) rotate(-13.65)" fill="#202020" opacity="0.7"><rect x="-2.2" y="-0.5" width="4.4" height="0.7"/><rect x="-1" y="0.4" width="2" height="0.6"/></g>
<g transform="translate(442.48,201.91) rotate(-13.65)" fill="#2a002a" opacity="0.62"><rect x="-1.6" y="-2.4" width="1.1" height="4.5"/><rect x="-0.3" y="-1.6" width="1.6" height="1"/><rect x="-0.3" y="0.2" width="1.6" height="1"/></g>
<g transform="translate(447.34,221.93) rotate(-13.65)" fill="#2a002a" opacity="0.62"><rect x="-1.6" y="-2.4" width="1.1" height="4.5"/><rect x="-0.3" y="-1.6" width="1.6" height="1"/><rect x="-0.3" y="0.2" width="1.6" height="1"/></g>
<g transform="translate(456.68,198.31) rotate(-13.65)" fill="#202020" opacity="0.7"><rect x="-2.2" y="-0.5" width="4.4" height="0.7"/><rect x="-1" y="0.4" width="2" height="0.6"/></g>
<g transform="translate(461.47,218.04) rotate(-13.65)" fill="#202020" opacity="0.7"><rect x="-2.2" y="-0.5" width="4.4" height="0.7"/><rect x="-1" y="0.4" width="2" height="0.6"/></g>
<g transform="translate(380.70,225.05) rotate(-13.65)" fill="#3a0000" opacity="0.7"><rect x="-2.2" y="-0.5" width="4.4" height="0.7"/><rect x="-1" y="0.4" width="2" height="0.6"/></g>
<g transform="translate(385.42,244.48) rotate(-13.65)" fill="#3a0000" opacity="0.7"><rect x="-2.2" y="-0.5" width="4.4" height="0.7"/><rect x="-1" y="0.4" width="2" height="0.6"/></g>
<g transform="translate(390.14,263.92) rotate(-13.65)" fill="#3a0000" opacity="0.7"><rect x="-2.2" y="-0.5" width="4.4" height="0.7"/><rect x="-1" y="0.4" width="2" height="0.6"/></g>
<g transform="translate(396.78,221.14) rotate(-13.65)" fill="#2a002a" opacity="0.62"><rect x="-1.6" y="-2.4" width="1.1" height="4.5"/><rect x="-0.3" y="-1.6" width="1.6" height="1"/><rect x="-0.3" y="0.2" width="1.6" height="1"/></g>
<g transform="translate(401.50,240.58) rotate(-13.65)" fill="#2a002a" opacity="0.62"><rect x="-1.6" y="-2.4" width="1.1" height="4.5"/><rect x="-0.3" y="-1.6" width="1.6" height="1"/><rect x="-0.3" y="0.2" width="1.6" height="1"/></g>
<g transform="translate(406.22,260.01) rotate(-13.65)" fill="#2a002a" opacity="0.62"><rect x="-1.6" y="-2.4" width="1.1" height="4.5"/><rect x="-0.3" y="-1.6" width="1.6" height="1"/><rect x="-0.3" y="0.2" width="1.6" height="1"/></g>
<g transform="translate(410.88,196.78) rotate(-13.65)" fill="#2a002a" opacity="0.62"><rect x="-1.6" y="-2.4" width="1.1" height="4.5"/><rect x="-0.3" y="-1.6" width="1.6" height="1"/><rect x="-0.3" y="0.2" width="1.6" height="1"/></g>
<g transform="translate(415.62,216.31) rotate(-13.65)" fill="#2a002a" opacity="0.62"><rect x="-1.6" y="-2.4" width="1.1" height="4.5"/><rect x="-0.3" y="-1.6" width="1.6" height="1"/><rect x="-0.3" y="0.2" width="1.6" height="1"/></g>
<g transform="translate(420.37,235.84) rotate(-13.65)" fill="#2a002a" opacity="0.62"><rect x="-1.6" y="-2.4" width="1.1" height="4.5"/><rect x="-0.3" y="-1.6" width="1.6" height="1"/><rect x="-0.3" y="0.2" width="1.6" height="1"/></g>
<g transform="translate(425.11,255.37) rotate(-13.65)" fill="#2a002a" opacity="0.62"><rect x="-1.6" y="-2.4" width="1.1" height="4.5"/><rect x="-0.3" y="-1.6" width="1.6" height="1"/><rect x="-0.3" y="0.2" width="1.6" height="1"/></g>
<g transform="translate(397.77,292.17) rotate(-13.65)" fill="#2a002a" opacity="0.62"><rect x="-1.6" y="-2.4" width="1.1" height="4.5"/><rect x="-0.3" y="-1.6" width="1.6" height="1"/><rect x="-0.3" y="0.2" width="1.6" height="1"/></g>
<g transform="translate(452.14,241.66) rotate(-13.65)" fill="#2a002a" opacity="0.62"><rect x="-1.6" y="-2.4" width="1.1" height="4.5"/><rect x="-0.3" y="-1.6" width="1.6" height="1"/><rect x="-0.3" y="0.2" width="1.6" height="1"/></g>
<g transform="translate(471.57,236.94) rotate(-13.65)" fill="#2a002a" opacity="0.62"><rect x="-1.6" y="-2.4" width="1.1" height="4.5"/><rect x="-0.3" y="-1.6" width="1.6" height="1"/><rect x="-0.3" y="0.2" width="1.6" height="1"/></g>
<g transform="translate(491.01,232.22) rotate(-13.65)" fill="#2a002a" opacity="0.62"><rect x="-1.6" y="-2.4" width="1.1" height="4.5"/><rect x="-0.3" y="-1.6" width="1.6" height="1"/><rect x="-0.3" y="0.2" width="1.6" height="1"/></g>
<g transform="translate(510.44,227.50) rotate(-13.65)" fill="#2a002a" opacity="0.62"><rect x="-1.6" y="-2.4" width="1.1" height="4.5"/><rect x="-0.3" y="-1.6" width="1.6" height="1"/><rect x="-0.3" y="0.2" width="1.6" height="1"/></g>
<g transform="translate(529.88,222.78) rotate(-13.65)" fill="#2a002a" opacity="0.62"><rect x="-1.6" y="-2.4" width="1.1" height="4.5"/><rect x="-0.3" y="-1.6" width="1.6" height="1"/><rect x="-0.3" y="0.2" width="1.6" height="1"/></g>
<g transform="translate(549.31,218.06) rotate(-13.65)" fill="#2a002a" opacity="0.62"><rect x="-1.6" y="-2.4" width="1.1" height="4.5"/><rect x="-0.3" y="-1.6" width="1.6" height="1"/><rect x="-0.3" y="0.2" width="1.6" height="1"/></g>
<g transform="translate(456.86,261.09) rotate(-13.65)" fill="#2a002a" opacity="0.62"><rect x="-1.6" y="-2.4" width="1.1" height="4.5"/><rect x="-0.3" y="-1.6" width="1.6" height="1"/><rect x="-0.3" y="0.2" width="1.6" height="1"/></g>
<g transform="translate(476.29,256.37) rotate(-13.65)" fill="#2a002a" opacity="0.62"><rect x="-1.6" y="-2.4" width="1.1" height="4.5"/><rect x="-0.3" y="-1.6" width="1.6" height="1"/><rect x="-0.3" y="0.2" width="1.6" height="1"/></g>
<g transform="translate(495.73,251.65) rotate(-13.65)" fill="#2a002a" opacity="0.62"><rect x="-1.6" y="-2.4" width="1.1" height="4.5"/><rect x="-0.3" y="-1.6" width="1.6" height="1"/><rect x="-0.3" y="0.2" width="1.6" height="1"/></g>
<g transform="translate(515.16,246.93) rotate(-13.65)" fill="#2a002a" opacity="0.62"><rect x="-1.6" y="-2.4" width="1.1" height="4.5"/><rect x="-0.3" y="-1.6" width="1.6" height="1"/><rect x="-0.3" y="0.2" width="1.6" height="1"/></g>
<g transform="translate(534.60,242.21) rotate(-13.65)" fill="#2a002a" opacity="0.62"><rect x="-1.6" y="-2.4" width="1.1" height="4.5"/><rect x="-0.3" y="-1.6" width="1.6" height="1"/><rect x="-0.3" y="0.2" width="1.6" height="1"/></g>
<g transform="translate(438.88,271.84) rotate(-13.65)" fill="#202020" opacity="0.7"><rect x="-2.2" y="-0.5" width="4.4" height="0.7"/><rect x="-1" y="0.4" width="2" height="0.6"/></g>
<g transform="translate(425.66,289.41) rotate(-13.65)" fill="#3a0000" opacity="0.7"><rect x="-2.2" y="-0.5" width="4.4" height="0.7"/><rect x="-1" y="0.4" width="2" height="0.6"/></g>
<g transform="translate(442.14,285.25) rotate(-13.65)" fill="#2a002a" opacity="0.62"><rect x="-1.6" y="-2.4" width="1.1" height="4.5"/><rect x="-0.3" y="-1.6" width="1.6" height="1"/><rect x="-0.3" y="0.2" width="1.6" height="1"/></g>
<g transform="translate(461.58,280.53) rotate(-13.65)" fill="#2a002a" opacity="0.62"><rect x="-1.6" y="-2.4" width="1.1" height="4.5"/><rect x="-0.3" y="-1.6" width="1.6" height="1"/><rect x="-0.3" y="0.2" width="1.6" height="1"/></g>
<g transform="translate(481.01,275.81) rotate(-13.65)" fill="#2a002a" opacity="0.62"><rect x="-1.6" y="-2.4" width="1.1" height="4.5"/><rect x="-0.3" y="-1.6" width="1.6" height="1"/><rect x="-0.3" y="0.2" width="1.6" height="1"/></g>
<g transform="translate(500.45,271.09) rotate(-13.65)" fill="#2a002a" opacity="0.62"><rect x="-1.6" y="-2.4" width="1.1" height="4.5"/><rect x="-0.3" y="-1.6" width="1.6" height="1"/><rect x="-0.3" y="0.2" width="1.6" height="1"/></g>
<g transform="translate(519.96,263.52) rotate(-13.65)" fill="#3a0000" opacity="0.7"><rect x="-2.2" y="-0.5" width="4.4" height="0.7"/><rect x="-1" y="0.4" width="2" height="0.6"/></g>
<g transform="translate(407.99,314.12) rotate(-13.65)" fill="#2a002a" opacity="0.62"><rect x="-1.6" y="-2.4" width="1.1" height="4.5"/><rect x="-0.3" y="-1.6" width="1.6" height="1"/><rect x="-0.3" y="0.2" width="1.6" height="1"/></g>
<g transform="translate(427.42,309.40) rotate(-13.65)" fill="#2a002a" opacity="0.62"><rect x="-1.6" y="-2.4" width="1.1" height="4.5"/><rect x="-0.3" y="-1.6" width="1.6" height="1"/><rect x="-0.3" y="0.2" width="1.6" height="1"/></g>
<g transform="translate(446.86,304.68) rotate(-13.65)" fill="#2a002a" opacity="0.62"><rect x="-1.6" y="-2.4" width="1.1" height="4.5"/><rect x="-0.3" y="-1.6" width="1.6" height="1"/><rect x="-0.3" y="0.2" width="1.6" height="1"/></g>
<g transform="translate(466.29,299.96) rotate(-13.65)" fill="#2a002a" opacity="0.62"><rect x="-1.6" y="-2.4" width="1.1" height="4.5"/><rect x="-0.3" y="-1.6" width="1.6" height="1"/><rect x="-0.3" y="0.2" width="1.6" height="1"/></g>
<g transform="translate(485.73,295.24) rotate(-13.65)" fill="#2a002a" opacity="0.62"><rect x="-1.6" y="-2.4" width="1.1" height="4.5"/><rect x="-0.3" y="-1.6" width="1.6" height="1"/><rect x="-0.3" y="0.2" width="1.6" height="1"/></g>
<g transform="translate(505.17,290.52) rotate(-13.65)" fill="#2a002a" opacity="0.62"><rect x="-1.6" y="-2.4" width="1.1" height="4.5"/><rect x="-0.3" y="-1.6" width="1.6" height="1"/><rect x="-0.3" y="0.2" width="1.6" height="1"/></g>
<g transform="translate(391.53,318.38) rotate(-13.65)" fill="#3a0000" opacity="0.7"><rect x="-2.2" y="-0.5" width="4.4" height="0.7"/><rect x="-1" y="0.4" width="2" height="0.6"/></g>
<g transform="translate(392.84,338.38) rotate(-13.65)" fill="#2a002a" opacity="0.62"><rect x="-1.6" y="-2.4" width="1.1" height="4.5"/><rect x="-0.3" y="-1.6" width="1.6" height="1"/><rect x="-0.3" y="0.2" width="1.6" height="1"/></g>
<g transform="translate(412.37,333.64) rotate(-13.65)" fill="#2a002a" opacity="0.62"><rect x="-1.6" y="-2.4" width="1.1" height="4.5"/><rect x="-0.3" y="-1.6" width="1.6" height="1"/><rect x="-0.3" y="0.2" width="1.6" height="1"/></g>
<g transform="translate(431.90,328.90) rotate(-13.65)" fill="#2a002a" opacity="0.62"><rect x="-1.6" y="-2.4" width="1.1" height="4.5"/><rect x="-0.3" y="-1.6" width="1.6" height="1"/><rect x="-0.3" y="0.2" width="1.6" height="1"/></g>
<g transform="translate(451.43,324.15) rotate(-13.65)" fill="#2a002a" opacity="0.62"><rect x="-1.6" y="-2.4" width="1.1" height="4.5"/><rect x="-0.3" y="-1.6" width="1.6" height="1"/><rect x="-0.3" y="0.2" width="1.6" height="1"/></g>
<g transform="translate(470.97,319.41) rotate(-13.65)" fill="#2a002a" opacity="0.62"><rect x="-1.6" y="-2.4" width="1.1" height="4.5"/><rect x="-0.3" y="-1.6" width="1.6" height="1"/><rect x="-0.3" y="0.2" width="1.6" height="1"/></g>
<g transform="translate(396.78,354.41) rotate(-13.65)" fill="#3a0000" opacity="0.7"><rect x="-2.2" y="-0.5" width="4.4" height="0.7"/><rect x="-1" y="0.4" width="2" height="0.6"/></g>
<g transform="translate(416.41,349.64) rotate(-13.65)" fill="#3a0000" opacity="0.7"><rect x="-2.2" y="-0.5" width="4.4" height="0.7"/><rect x="-1" y="0.4" width="2" height="0.6"/></g>
<g transform="translate(436.86,348.27) rotate(-13.65)" fill="#2a002a" opacity="0.62"><rect x="-1.6" y="-2.4" width="1.1" height="4.5"/><rect x="-0.3" y="-1.6" width="1.6" height="1"/><rect x="-0.3" y="0.2" width="1.6" height="1"/></g>
<g transform="translate(456.30,343.55) rotate(-13.65)" fill="#2a002a" opacity="0.62"><rect x="-1.6" y="-2.4" width="1.1" height="4.5"/><rect x="-0.3" y="-1.6" width="1.6" height="1"/><rect x="-0.3" y="0.2" width="1.6" height="1"/></g>
<g transform="translate(474.73,334.70) rotate(-13.65)" fill="#202020" opacity="0.7"><rect x="-2.2" y="-0.5" width="4.4" height="0.7"/><rect x="-1" y="0.4" width="2" height="0.6"/></g>
<g transform="translate(460.05,357.31) rotate(-13.65)" fill="#202020" opacity="0.7"><rect x="-2.2" y="-0.5" width="4.4" height="0.7"/><rect x="-1" y="0.4" width="2" height="0.6"/></g>
<polyline points="364.03,211.50 208.35,212.30 208.35,367.10 469.40,367.10 502.43,320.44 507.53,323.54 538.23,280.44 531.13,275.34 564.93,228.54 563.32,227.01 524.73,68.13 374.11,104.70 398.04,203.24 364.03,211.50 386.94,305.86" fill="none" stroke="#64786c" stroke-width="3.5" stroke-linejoin="miter" stroke-miterlimit="6"/>
<polyline points="507.53,323.54 485.55,307.86" fill="none" stroke="#64786c" stroke-width="3.5" stroke-linejoin="miter" stroke-miterlimit="6"/>
<polyline points="209.50,280.60 274.20,280.60" fill="none" stroke="#64786c" stroke-width="3.5" stroke-linejoin="miter" stroke-miterlimit="6"/>
<polyline points="306.70,213.00 306.70,224.50" fill="none" stroke="#64786c" stroke-width="3.5" stroke-linejoin="miter" stroke-miterlimit="6"/>
<polyline points="325.70,279.30 325.70,366.00" fill="none" stroke="#64786c" stroke-width="3.5" stroke-linejoin="miter" stroke-miterlimit="6"/>
<polyline points="325.70,289.40 385.50,289.40" fill="none" stroke="#64786c" stroke-width="3.5" stroke-linejoin="miter" stroke-miterlimit="6"/>
<polyline points="376.00,366.00 376.00,305.80" fill="none" stroke="#64786c" stroke-width="3.5" stroke-linejoin="miter" stroke-miterlimit="6"/>
<polyline points="390.17,168.72 492.21,143.94" fill="none" stroke="#64786c" stroke-width="3.5" stroke-linejoin="miter" stroke-miterlimit="6"/>
<polyline points="415.05,162.68 439.71,264.23" fill="none" stroke="#64786c" stroke-width="3.5" stroke-linejoin="miter" stroke-miterlimit="6"/>
<polyline points="380.34,278.65 441.36,263.83" fill="none" stroke="#64786c" stroke-width="3.5" stroke-linejoin="miter" stroke-miterlimit="6"/>
<polyline points="421.19,187.95 459.47,178.65 470.64,224.61" fill="none" stroke="#64786c" stroke-width="3.5" stroke-linejoin="miter" stroke-miterlimit="6"/>
<polyline points="468.98,225.01 558.09,203.37" fill="none" stroke="#64786c" stroke-width="3.5" stroke-linejoin="miter" stroke-miterlimit="6"/>
<polyline points="494.51,169.11 505.91,216.05" fill="none" stroke="#64786c" stroke-width="3.5" stroke-linejoin="miter" stroke-miterlimit="6"/>
<polyline points="475.58,80.58 482.76,110.12" fill="none" stroke="#64786c" stroke-width="3.5" stroke-linejoin="miter" stroke-miterlimit="6"/>
<polyline points="407.84,271.97 414.11,297.82" fill="none" stroke="#64786c" stroke-width="3.5" stroke-linejoin="miter" stroke-miterlimit="6"/>
<polyline points="374.50,306.70 415.67,297.44" fill="none" stroke="#64786c" stroke-width="3.5" stroke-linejoin="miter" stroke-miterlimit="6"/>
<polyline points="364.03,211.50 208.35,212.30 208.35,367.10 469.40,367.10 502.43,320.44 507.53,323.54 538.23,280.44 531.13,275.34 564.93,228.54 563.32,227.01 524.73,68.13 374.11,104.70 398.04,203.24 364.03,211.50 386.94,305.86" fill="none" stroke="#8ea697" stroke-width="2.4" stroke-linejoin="miter" stroke-miterlimit="6"/>
<polyline points="507.53,323.54 485.55,307.86" fill="none" stroke="#8ea697" stroke-width="2.4" stroke-linejoin="miter" stroke-miterlimit="6"/>
<polyline points="209.50,280.60 274.20,280.60" fill="none" stroke="#8ea697" stroke-width="2.4" stroke-linejoin="miter" stroke-miterlimit="6"/>
<polyline points="306.70,213.00 306.70,224.50" fill="none" stroke="#8ea697" stroke-width="2.4" stroke-linejoin="miter" stroke-miterlimit="6"/>
<polyline points="325.70,279.30 325.70,366.00" fill="none" stroke="#8ea697" stroke-width="2.4" stroke-linejoin="miter" stroke-miterlimit="6"/>
<polyline points="325.70,289.40 385.50,289.40" fill="none" stroke="#8ea697" stroke-width="2.4" stroke-linejoin="miter" stroke-miterlimit="6"/>
<polyline points="376.00,366.00 376.00,305.80" fill="none" stroke="#8ea697" stroke-width="2.4" stroke-linejoin="miter" stroke-miterlimit="6"/>
<polyline points="390.17,168.72 492.21,143.94" fill="none" stroke="#8ea697" stroke-width="2.4" stroke-linejoin="miter" stroke-miterlimit="6"/>
<polyline points="415.05,162.68 439.71,264.23" fill="none" stroke="#8ea697" stroke-width="2.4" stroke-linejoin="miter" stroke-miterlimit="6"/>
<polyline points="380.34,278.65 441.36,263.83" fill="none" stroke="#8ea697" stroke-width="2.4" stroke-linejoin="miter" stroke-miterlimit="6"/>
<polyline points="421.19,187.95 459.47,178.65 470.64,224.61" fill="none" stroke="#8ea697" stroke-width="2.4" stroke-linejoin="miter" stroke-miterlimit="6"/>
<polyline points="468.98,225.01 558.09,203.37" fill="none" stroke="#8ea697" stroke-width="2.4" stroke-linejoin="miter" stroke-miterlimit="6"/>
<polyline points="494.51,169.11 505.91,216.05" fill="none" stroke="#8ea697" stroke-width="2.4" stroke-linejoin="miter" stroke-miterlimit="6"/>
<polyline points="475.58,80.58 482.76,110.12" fill="none" stroke="#8ea697" stroke-width="2.4" stroke-linejoin="miter" stroke-miterlimit="6"/>
<polyline points="407.84,271.97 414.11,297.82" fill="none" stroke="#8ea697" stroke-width="2.4" stroke-linejoin="miter" stroke-miterlimit="6"/>
<polyline points="374.50,306.70 415.67,297.44" fill="none" stroke="#8ea697" stroke-width="2.4" stroke-linejoin="miter" stroke-miterlimit="6"/>
<circle cx="209.7" cy="278.3" r="5.6" fill="none" stroke="#f2a030" stroke-width="0.7"/>
<circle cx="556.7" cy="205.3" r="5.6" fill="none" stroke="#f2a030" stroke-width="0.7"/>
<circle cx="422.7" cy="185.5" r="5.6" fill="none" stroke="#f2a030" stroke-width="0.7"/>
<circle cx="434.6" cy="261.5" r="5.6" fill="none" stroke="#f2a030" stroke-width="0.7"/>
<circle cx="329.2" cy="294.2" r="5.6" fill="none" stroke="#f2a030" stroke-width="0.7"/>
<circle cx="408.3" cy="296.3" r="5.6" fill="none" stroke="#f2a030" stroke-width="0.7"/>
</g>
<rect x="597.2" y="17.6" width="127" height="88.6" fill="#000" opacity="0.08"/>
<rect x="597.8" y="18.1" width="125.8" height="87.2" fill="#f0f0f0" stroke="#b4b4b4" stroke-width="0.5"/>
<rect x="598" y="18.3" width="125.4" height="9.4" fill="#f3f3f3"/>
<text x="600.90" y="24.70" font-size="4.80" fill="#a2a2a2" stroke="#a2a2a2" stroke-width="0.04" text-anchor="start" textLength="13.4" lengthAdjust="spacingAndGlyphs">3D Eye2</text>
<rect x="716.2" y="19.8" width="5.6" height="5.8" fill="#dcdcdc"/><path d="M718,21.6l2,2.2M720,21.6l-2,2.2" stroke="#b0b0b0" stroke-width="0.5"/>
<rect x="598" y="27.7" width="125.4" height="7.8" fill="#fdfdfd"/>
<rect x="602.6" y="29.8" width="3.6" height="3.8" fill="#555"/><rect x="603.5" y="30.7" width="1.8" height="1.9" fill="#ddd"/>
<rect x="608.3" y="29" width="0.4" height="5.4" fill="#c8c8c8"/>
<text x="612.00" y="33.20" font-size="4.30" fill="#111" stroke="#111" stroke-width="0.13" text-anchor="start" textLength="35" lengthAdjust="spacingAndGlyphs">Isometrische Ansicht</text>
<text x="650.00" y="33.20" font-size="4.30" fill="#111" stroke="#111" stroke-width="0.13" text-anchor="start" textLength="23" lengthAdjust="spacingAndGlyphs">Ansicht Oben</text>
<text x="676.60" y="33.20" font-size="4.30" fill="#111" stroke="#111" stroke-width="0.13" text-anchor="start" textLength="23.4" lengthAdjust="spacingAndGlyphs">Ansicht Vorne</text>
<path d="M720.4,32h2l-1,1.3z" fill="#555"/>
<rect x="598.6" y="36" width="115" height="69" fill="url(#sky)"/>
<g clip-path="url(#c3d)">
<path d="M388.0,36l86.2,69M448.0,36l-81.2,69M392.3,36l86.2,69M452.3,36l-81.2,69M396.6,36l86.2,69M456.6,36l-81.2,69M400.9,36l86.2,69M460.9,36l-81.2,69M405.2,36l86.2,69M465.2,36l-81.2,69M409.5,36l86.2,69M469.5,36l-81.2,69M413.8,36l86.2,69M473.8,36l-81.2,69M418.1,36l86.2,69M478.1,36l-81.2,69M422.4,36l86.2,69M482.4,36l-81.2,69M426.7,36l86.2,69M486.7,36l-81.2,69M431.0,36l86.2,69M491.0,36l-81.2,69M435.3,36l86.2,69M495.3,36l-81.2,69M439.6,36l86.2,69M499.6,36l-81.2,69M443.9,36l86.2,69M503.9,36l-81.2,69M448.2,36l86.2,69M508.2,36l-81.2,69M452.5,36l86.2,69M512.5,36l-81.2,69M456.8,36l86.2,69M516.8,36l-81.2,69M461.1,36l86.2,69M521.1,36l-81.2,69M465.4,36l86.2,69M525.4,36l-81.2,69M469.7,36l86.2,69M529.7,36l-81.2,69M474.0,36l86.2,69M534.0,36l-81.2,69M478.3,36l86.2,69M538.3,36l-81.2,69M482.6,36l86.2,69M542.6,36l-81.2,69M486.9,36l86.2,69M546.9,36l-81.2,69M491.2,36l86.2,69M551.2,36l-81.2,69M495.5,36l86.2,69M555.5,36l-81.2,69M499.8,36l86.2,69M559.8,36l-81.2,69M504.1,36l86.2,69M564.1,36l-81.2,69M508.4,36l86.2,69M568.4,36l-81.2,69M512.7,36l86.2,69M572.7,36l-81.2,69M517.0,36l86.2,69M577.0,36l-81.2,69M521.3,36l86.2,69M581.3,36l-81.2,69M525.6,36l86.2,69M585.6,36l-81.2,69M529.9,36l86.2,69M589.9,36l-81.2,69M534.2,36l86.2,69M594.2,36l-81.2,69M538.5,36l86.2,69M598.5,36l-81.2,69M542.8,36l86.2,69M602.8,36l-81.2,69M547.1,36l86.2,69M607.1,36l-81.2,69M551.4,36l86.2,69M611.4,36l-81.2,69M555.7,36l86.2,69M615.7,36l-81.2,69M560.0,36l86.2,69M620.0,36l-81.2,69M564.3,36l86.2,69M624.3,36l-81.2,69M568.6,36l86.2,69M628.6,36l-81.2,69M572.9,36l86.2,69M632.9,36l-81.2,69M577.2,36l86.2,69M637.2,36l-81.2,69M581.5,36l86.2,69M641.5,36l-81.2,69M585.8,36l86.2,69M645.8,36l-81.2,69M590.1,36l86.2,69M650.1,36l-81.2,69M594.4,36l86.2,69M654.4,36l-81.2,69M598.7,36l86.2,69M658.7,36l-81.2,69M603.0,36l86.2,69M663.0,36l-81.2,69M607.3,36l86.2,69M667.3,36l-81.2,69M611.6,36l86.2,69M671.6,36l-81.2,69M615.9,36l86.2,69M675.9,36l-81.2,69M620.2,36l86.2,69M680.2,36l-81.2,69M624.5,36l86.2,69M684.5,36l-81.2,69M628.8,36l86.2,69M688.8,36l-81.2,69M633.1,36l86.2,69M693.1,36l-81.2,69M637.4,36l86.2,69M697.4,36l-81.2,69M641.7,36l86.2,69M701.7,36l-81.2,69M646.0,36l86.2,69M706.0,36l-81.2,69M650.3,36l86.2,69M710.3,36l-81.2,69M654.6,36l86.2,69M714.6,36l-81.2,69M658.9,36l86.2,69M718.9,36l-81.2,69M663.2,36l86.2,69M723.2,36l-81.2,69M667.5,36l86.2,69M727.5,36l-81.2,69M671.8,36l86.2,69M731.8,36l-81.2,69M676.1,36l86.2,69M736.1,36l-81.2,69M680.4,36l86.2,69M740.4,36l-81.2,69M684.7,36l86.2,69M744.7,36l-81.2,69M689.0,36l86.2,69M749.0,36l-81.2,69M693.3,36l86.2,69M753.3,36l-81.2,69M697.6,36l86.2,69M757.6,36l-81.2,69M701.9,36l86.2,69M761.9,36l-81.2,69M706.2,36l86.2,69M766.2,36l-81.2,69M710.5,36l86.2,69M770.5,36l-81.2,69M714.8,36l86.2,69M774.8,36l-81.2,69M719.1,36l86.2,69M779.1,36l-81.2,69M723.4,36l86.2,69M783.4,36l-81.2,69M727.7,36l86.2,69M787.7,36l-81.2,69M732.0,36l86.2,69M792.0,36l-81.2,69M736.3,36l86.2,69M796.3,36l-81.2,69M740.6,36l86.2,69M800.6,36l-81.2,69M744.9,36l86.2,69M804.9,36l-81.2,69M749.2,36l86.2,69M809.2,36l-81.2,69M753.5,36l86.2,69M813.5,36l-81.2,69M757.8,36l86.2,69M817.8,36l-81.2,69M762.1,36l86.2,69M822.1,36l-81.2,69M766.4,36l86.2,69M826.4,36l-81.2,69M770.7,36l86.2,69M830.7,36l-81.2,69M775.0,36l86.2,69M835.0,36l-81.2,69M779.3,36l86.2,69M839.3,36l-81.2,69M783.6,36l86.2,69M843.6,36l-81.2,69M787.9,36l86.2,69M847.9,36l-81.2,69M792.2,36l86.2,69M852.2,36l-81.2,69M796.5,36l86.2,69M856.5,36l-81.2,69M800.8,36l86.2,69M860.8,36l-81.2,69M805.1,36l86.2,69M865.1,36l-81.2,69M809.4,36l86.2,69M869.4,36l-81.2,69M813.7,36l86.2,69M873.7,36l-81.2,69" stroke="#2a3a5a" stroke-width="0.3" opacity="0.2" fill="none"/>
<polygon points="604.3,54.6 631.5,42.1 643.1,48.0 653.6,54.2 661.3,58.5 664.5,58.5 669.3,52.3 673.9,46.6 686.4,50.3 707.6,56.5 697.9,76.7 697.0,82.2 690.3,81.1 687.4,84.5 681.6,82.5 673.0,85.9 660.5,83.6 657.7,87.3 647.9,88.8 639.2,84.0 629.6,77.2 607.6,57.6 697.0,82.0 692.2,89.8 678.7,93.6 662.5,97.0 655.6,98.4 644.0,97.3 628.8,83.4 604.8,58.5" fill="#969a94"/>
<polygon points="639.2,84.0 647.9,88.8 648.1,97.7 644.0,97.3 639.0,92.3" fill="#72766f" opacity="0.8"/>
<polygon points="657.7,87.3 660.5,83.6 661.3,92.3 662.5,97.0 657.3,98.0" fill="#72766f" opacity="0.8"/>
<polygon points="673.0,85.9 681.6,82.5 682.3,92.7 673.4,94.8" fill="#72766f" opacity="0.8"/>
<polygon points="687.4,84.5 690.3,81.1 691.2,89.8 688.0,90.9" fill="#72766f" opacity="0.8"/>
<rect x="616.4" y="68.3" width="1" height="3.4" fill="#2a2a1a" opacity="0.7"/>
<rect x="621.7" y="73.6" width="1" height="3.4" fill="#2a2a1a" opacity="0.7"/>
<rect x="627.9" y="79.9" width="1" height="3.4" fill="#2a2a1a" opacity="0.7"/>
<rect x="633.3" y="84.3" width="1" height="3.4" fill="#2a2a1a" opacity="0.7"/>
<rect x="641.7" y="91.4" width="1" height="3.4" fill="#2a2a1a" opacity="0.7"/>
<rect x="651.6" y="92.7" width="1" height="3.4" fill="#2a2a1a" opacity="0.7"/>
<rect x="654.7" y="92.7" width="1" height="3.4" fill="#2a2a1a" opacity="0.7"/>
<rect x="665.3" y="91.4" width="1" height="3.4" fill="#2a2a1a" opacity="0.7"/>
<rect x="669.8" y="90.6" width="1" height="3.4" fill="#2a2a1a" opacity="0.7"/>
<rect x="676.0" y="88.8" width="1" height="3.4" fill="#2a2a1a" opacity="0.7"/>
<rect x="684.9" y="87.3" width="1" height="3.4" fill="#2a2a1a" opacity="0.7"/>
<rect x="693.8" y="85.2" width="1" height="3.4" fill="#2a2a1a" opacity="0.7"/>
<polygon points="604.3,54.6 631.5,42.1 643.1,48.0 653.6,54.2 661.3,58.5 664.5,58.5 669.3,52.3 673.9,46.6 686.4,50.3 707.6,56.5 697.9,76.7 697.0,82.2 690.3,81.1 687.4,84.5 681.6,82.5 673.0,85.9 660.5,83.6 657.7,87.3 647.9,88.8 639.2,84.0 629.6,77.2 607.6,57.6" fill="#fb0af6" stroke="#878e87" stroke-width="1.3" stroke-linejoin="round"/>
<polyline points="618.2,64.9 636.3,55.8 647.9,64.7 661.3,69.5 667.1,63.8" fill="none" stroke="#848c84" stroke-width="1.2"/>
<polyline points="636.3,55.8 641.7,53.2 631.5,46.9" fill="none" stroke="#848c84" stroke-width="1.2"/>
<polyline points="630.6,72.7 642.7,65.3 648.4,69.5 653.8,66.5" fill="none" stroke="#848c84" stroke-width="1.2"/>
<polyline points="641.7,53.2 653.8,59.9" fill="none" stroke="#848c84" stroke-width="1.2"/>
<polyline points="647.9,64.7 642.7,65.3" fill="none" stroke="#848c84" stroke-width="1.2"/>
<polyline points="650.2,66.5 660.5,72.4 668.9,60.6" fill="none" stroke="#848c84" stroke-width="1.2"/>
<polyline points="673.0,66.7 677.8,61.7 689.4,65.3" fill="none" stroke="#848c84" stroke-width="1.2"/>
<polyline points="673.0,66.7 697.0,76.3" fill="none" stroke="#848c84" stroke-width="1.2"/>
<polyline points="669.8,52.8 687.6,58.9" fill="none" stroke="#848c84" stroke-width="1.2"/>
<polyline points="653.8,59.9 661.3,58.5" fill="none" stroke="#848c84" stroke-width="1.2"/>
<polygon points="618.6,47.5 621.0,46.7 631.5,53.7 629.2,55.2" fill="#f01818"/>
<polygon points="640.2,49.1 644.0,50.5 644.0,52.4 640.2,51.0" fill="#f01818"/>
<polygon points="618.1,64.3 635.9,56.1 638.3,57.6 620.5,66.7" fill="#f01818"/>
<polygon points="620.5,68.6 623.9,67.2 629.6,72.4 625.8,74.3" fill="#f01818"/>
<polygon points="637.3,54.2 641.6,55.6 641.6,57.4 637.3,56.0" fill="#f01818"/>
<polygon points="650.2,54.2 653.6,55.6 653.6,57.4 650.2,56.0" fill="#1010f0"/>
<polygon points="640.2,60.6 645.0,62.1 645.0,64.6 640.2,63.1" fill="#1010f0"/>
<polygon points="647.9,63.8 656.5,56.6 658.9,57.6 650.2,65.3" fill="#f01818"/>
<polygon points="647.9,63.8 656.5,56.6 657.2,56.9 648.5,64.2" fill="#ff9a10"/>
<polygon points="645.9,57.1 650.2,58.5 650.2,60.1 645.9,58.7" fill="#f01818"/>
<polygon points="637.3,68.6 643.0,70.1 643.0,72.9 637.3,71.5" fill="#f01818"/>
<polygon points="650.2,69.5 655.0,71.0 655.0,73.5 650.2,72.0" fill="#f01818"/>
<polyline points="630.6,72.4 642.6,65.2" fill="none" stroke="#d8d8d0" stroke-width="1.0"/>
<polygon points="630.1,75.8 633.5,74.4 641.1,79.7 637.8,81.6" fill="#f01818"/>
<polygon points="650.2,84.4 653.1,83.5 656.5,87.3 654.1,88.3" fill="#1010f0"/>
<polygon points="637.7,83.4 641.7,85.4 640.9,86.6 637.0,84.5" fill="#ffa020"/>
<polyline points="657.4,87.3 660.8,83.5" fill="none" stroke="#80f000" stroke-width="0.8"/>
<polygon points="670.1,52.3 686.4,58.0 686.0,59.5 669.7,53.7" fill="#f01818"/>
<polygon points="681.6,65.2 685.0,63.8 686.9,67.6 683.1,69.6" fill="#1010f0"/>
<polyline points="707.6,57.1 697.9,76.3" fill="none" stroke="#80f000" stroke-width="0.9"/>
<polyline points="662.5,69.1 669.2,60.9" fill="none" stroke="#80f000" stroke-width="0.8"/>
<polygon points="675.4,80.2 681.2,81.6 680.7,84.1 675.1,82.6" fill="#f01818"/>
<polygon points="664.9,85.6 670.6,86.6 670.2,88.4 664.5,87.3" fill="#f0d040"/>
<polyline points="657.7,87.3 660.5,83.6" fill="none" stroke="#80f000" stroke-width="0.8"/>
<polygon points="680.5,62.1 687.6,68.3 701.9,68.3 706.3,60.3 701.9,56.7" fill="#c040c8" opacity="0.35"/>
<polygon points="686.9,50.4 695.1,46.5 703.7,50.4 703.2,58.5 696.0,64.8 686.9,59.5" fill="#3a3e46" opacity="0.92"/>
<polygon points="686.9,50.4 695.1,46.5 703.7,50.4 696.0,54.7" fill="#6a707c" opacity="0.95"/>
<polygon points="686.9,54.0 696.0,58.5 703.5,54.4 703.2,58.5 696.0,64.8 686.9,59.5" fill="#b030b8" opacity="0.7"/>
<circle cx="619.9" cy="42.8" r="2.5" fill="none" stroke="#4a5460" stroke-width="0.45" opacity="0.75"/>
<circle cx="631.5" cy="42.8" r="2.5" fill="none" stroke="#4a5460" stroke-width="0.45" opacity="0.75"/>
<circle cx="643.1" cy="42.5" r="2.5" fill="none" stroke="#4a5460" stroke-width="0.45" opacity="0.75"/>
<circle cx="655.2" cy="42.1" r="2.5" fill="none" stroke="#4a5460" stroke-width="0.45" opacity="0.75"/>
<circle cx="678.7" cy="42.5" r="2.5" fill="none" stroke="#4a5460" stroke-width="0.45" opacity="0.75"/>
<circle cx="690.3" cy="40.7" r="2.5" fill="none" stroke="#4a5460" stroke-width="0.45" opacity="0.75"/>
<circle cx="631.5" cy="43.2" r="1.3" fill="#30104a"/>
<rect x="662.0" y="37.9" width="10" height="9.6" fill="#d060b0" opacity="0.7"/><path d="M663.7,42.7h6.6M667.0,39.5v6.4" stroke="#b8a0c0" stroke-width="0.6"/>
<circle cx="605.2" cy="61.7" r="2.6" fill="#f4f4f4" stroke="#222" stroke-width="0.5"/><path d="M605.2,60.5l-2.2,2.6h4.4z" fill="#111"/>
<rect x="609.2" y="56.4" width="6" height="2" fill="#f0e0f0" opacity="0.8"/>
<path d="M612.8,90.6v-7.5M612.8,90.6l7.5,-5M612.8,90.6l8.5,5.2" stroke="#111" stroke-width="0.9" fill="none"/>
<circle cx="612.8" cy="90.6" r="0.9" fill="#111"/>
</g>
<rect x="598.6" y="36" width="115" height="69" fill="none" stroke="#9aa0a8" stroke-width="0.4"/>
<rect x="714" y="35.6" width="9.2" height="69.4" fill="#dde2ee"/>
<rect x="715.6" y="38" width="6" height="28" fill="url(#tab)" stroke="#9aa6c4" stroke-width="0.4"/>
<text transform="translate(717.2,41) rotate(90)" font-size="3.6" fill="#3a5a9a" textLength="21" lengthAdjust="spacingAndGlyphs">Taktauswahl</text>
</svg></body></html>
